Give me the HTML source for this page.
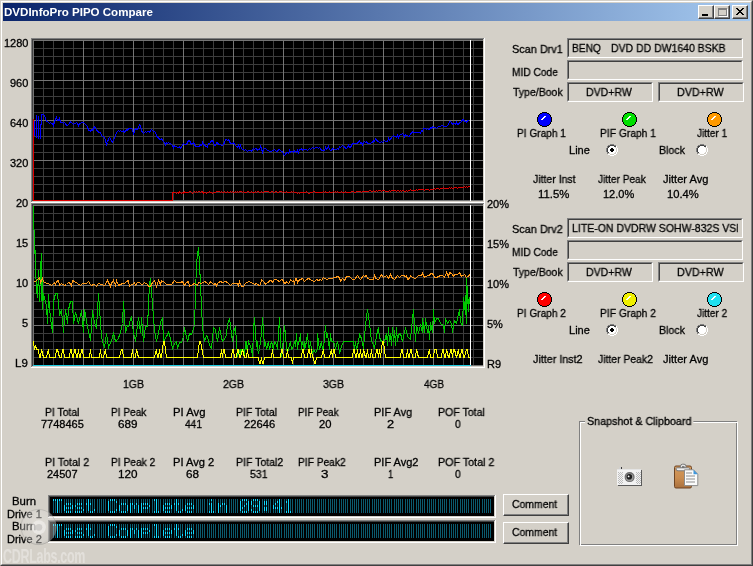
<!DOCTYPE html>
<html><head><meta charset="utf-8">
<style>
html,body{margin:0;padding:0;}
body{width:753px;height:566px;overflow:hidden;position:relative;background:#d4d0c8;font-family:"Liberation Sans",sans-serif;font-size:11px;color:#000;}
.abs{position:absolute;}
.t{position:absolute;white-space:nowrap;line-height:13px;font-size:11px;will-change:transform;-webkit-text-stroke:0.3px currentColor;}
.r{text-align:right;}
.c{text-align:center;}
.sunk{position:absolute;box-sizing:border-box;border-top:1px solid #808080;border-left:1px solid #808080;border-right:1px solid #fff;border-bottom:1px solid #fff;}
.sunk>i{position:absolute;left:0;top:0;right:0;bottom:0;border-top:1px solid #404040;border-left:1px solid #404040;border-right:1px solid #d4d0c8;border-bottom:1px solid #d4d0c8;}
.btn{position:absolute;box-sizing:border-box;border-top:1px solid #fff;border-left:1px solid #fff;border-right:1px solid #404040;border-bottom:1px solid #404040;background:#d4d0c8;}
.btn>i{position:absolute;left:0;top:0;right:0;bottom:0;border-right:1px solid #808080;border-bottom:1px solid #808080;}
.led{position:absolute;width:13px;height:13px;border:1px solid #000;border-radius:50%;}
.led::after{content:"";position:absolute;left:3px;top:3px;width:4px;height:1.5px;background:#fff;transform:rotate(-45deg);border-radius:1px;}
.radio{position:absolute;width:12px;height:12px;}
</style></head><body>
<!-- window frame -->
<div class="abs" style="left:0;top:0;width:753px;height:566px;box-sizing:border-box;border-top:1px solid #d4d0c8;border-left:1px solid #d4d0c8;border-right:1px solid #404040;border-bottom:1px solid #404040;"></div>
<div class="abs" style="left:1px;top:1px;width:751px;height:564px;box-sizing:border-box;border-top:1px solid #fff;border-left:1px solid #fff;border-right:1px solid #808080;border-bottom:1px solid #808080;"></div>
<!-- title bar -->
<div class="abs" style="left:3px;top:3px;width:747px;height:18px;background:linear-gradient(to right,#0a246a,#a6caf0);"></div>
<div class="btn" style="left:698px;top:5px;width:16px;height:14px;"><i></i></div>
<div class="abs" style="left:702px;top:14px;width:6px;height:2px;background:#000;"></div>
<div class="btn" style="left:714px;top:5px;width:16px;height:14px;"><i></i></div>
<div class="abs" style="left:718px;top:8px;width:9px;height:8px;box-sizing:border-box;border:1px solid #808080;border-top-width:2px;box-shadow:1px 1px 0 #fff;"></div>
<div class="btn" style="left:732px;top:5px;width:16px;height:14px;"><i></i></div>
<svg class="abs" style="left:732px;top:5px" width="16" height="14" shape-rendering="crispEdges"><path d="M4 3h2v1h-2zM10 3h2v1h-2zM5 4h2v1h-2zM9 4h2v1h-2zM6 5h4v1h-4zM7 6h2v1h-2zM6 7h4v1h-4zM5 8h2v1h-2zM9 8h2v1h-2zM4 9h2v1h-2zM10 9h2v1h-2z" fill="#000"/></svg>

<svg class="abs" style="left:0;top:0" width="500" height="380" shape-rendering="crispEdges">
<rect x="31" y="38" width="454" height="1" fill="#808080"/><rect x="31" y="38" width="1" height="164" fill="#808080"/>
<rect x="32" y="39" width="452" height="1" fill="#404040"/><rect x="32" y="39" width="1" height="162" fill="#404040"/>
<rect x="31" y="202" width="454" height="1" fill="#fff"/><rect x="484" y="38" width="1" height="165" fill="#fff"/>
<rect x="32" y="201" width="452" height="1" fill="#d4d0c8"/><rect x="483" y="39" width="1" height="163" fill="#d4d0c8"/>
<rect x="33" y="40" width="450" height="161" fill="#000"/>
<line x1="43.5" y1="40" x2="43.5" y2="201" stroke="#3c3c3c"/><line x1="53.5" y1="40" x2="53.5" y2="201" stroke="#3c3c3c"/><line x1="63.5" y1="40" x2="63.5" y2="201" stroke="#3c3c3c"/><line x1="73.5" y1="40" x2="73.5" y2="201" stroke="#3c3c3c"/><line x1="93.5" y1="40" x2="93.5" y2="201" stroke="#3c3c3c"/><line x1="103.5" y1="40" x2="103.5" y2="201" stroke="#3c3c3c"/><line x1="113.5" y1="40" x2="113.5" y2="201" stroke="#3c3c3c"/><line x1="123.5" y1="40" x2="123.5" y2="201" stroke="#3c3c3c"/><line x1="143.5" y1="40" x2="143.5" y2="201" stroke="#3c3c3c"/><line x1="153.5" y1="40" x2="153.5" y2="201" stroke="#3c3c3c"/><line x1="163.5" y1="40" x2="163.5" y2="201" stroke="#3c3c3c"/><line x1="173.5" y1="40" x2="173.5" y2="201" stroke="#3c3c3c"/><line x1="193.5" y1="40" x2="193.5" y2="201" stroke="#3c3c3c"/><line x1="203.5" y1="40" x2="203.5" y2="201" stroke="#3c3c3c"/><line x1="213.5" y1="40" x2="213.5" y2="201" stroke="#3c3c3c"/><line x1="223.5" y1="40" x2="223.5" y2="201" stroke="#3c3c3c"/><line x1="243.5" y1="40" x2="243.5" y2="201" stroke="#3c3c3c"/><line x1="253.5" y1="40" x2="253.5" y2="201" stroke="#3c3c3c"/><line x1="263.5" y1="40" x2="263.5" y2="201" stroke="#3c3c3c"/><line x1="273.5" y1="40" x2="273.5" y2="201" stroke="#3c3c3c"/><line x1="293.5" y1="40" x2="293.5" y2="201" stroke="#3c3c3c"/><line x1="303.5" y1="40" x2="303.5" y2="201" stroke="#3c3c3c"/><line x1="313.5" y1="40" x2="313.5" y2="201" stroke="#3c3c3c"/><line x1="323.5" y1="40" x2="323.5" y2="201" stroke="#3c3c3c"/><line x1="343.5" y1="40" x2="343.5" y2="201" stroke="#3c3c3c"/><line x1="353.5" y1="40" x2="353.5" y2="201" stroke="#3c3c3c"/><line x1="363.5" y1="40" x2="363.5" y2="201" stroke="#3c3c3c"/><line x1="373.5" y1="40" x2="373.5" y2="201" stroke="#3c3c3c"/><line x1="393.5" y1="40" x2="393.5" y2="201" stroke="#3c3c3c"/><line x1="403.5" y1="40" x2="403.5" y2="201" stroke="#3c3c3c"/><line x1="413.5" y1="40" x2="413.5" y2="201" stroke="#3c3c3c"/><line x1="423.5" y1="40" x2="423.5" y2="201" stroke="#3c3c3c"/><line x1="443.5" y1="40" x2="443.5" y2="201" stroke="#3c3c3c"/><line x1="453.5" y1="40" x2="453.5" y2="201" stroke="#3c3c3c"/><line x1="463.5" y1="40" x2="463.5" y2="201" stroke="#3c3c3c"/><line x1="473.5" y1="40" x2="473.5" y2="201" stroke="#3c3c3c"/><line x1="33" y1="48.5" x2="483" y2="48.5" stroke="#3c3c3c"/><line x1="33" y1="56.5" x2="483" y2="56.5" stroke="#3c3c3c"/><line x1="33" y1="64.5" x2="483" y2="64.5" stroke="#3c3c3c"/><line x1="33" y1="72.5" x2="483" y2="72.5" stroke="#3c3c3c"/><line x1="33" y1="88.5" x2="483" y2="88.5" stroke="#3c3c3c"/><line x1="33" y1="96.5" x2="483" y2="96.5" stroke="#3c3c3c"/><line x1="33" y1="104.5" x2="483" y2="104.5" stroke="#3c3c3c"/><line x1="33" y1="112.5" x2="483" y2="112.5" stroke="#3c3c3c"/><line x1="33" y1="128.5" x2="483" y2="128.5" stroke="#3c3c3c"/><line x1="33" y1="136.5" x2="483" y2="136.5" stroke="#3c3c3c"/><line x1="33" y1="144.5" x2="483" y2="144.5" stroke="#3c3c3c"/><line x1="33" y1="152.5" x2="483" y2="152.5" stroke="#3c3c3c"/><line x1="33" y1="168.5" x2="483" y2="168.5" stroke="#3c3c3c"/><line x1="33" y1="176.5" x2="483" y2="176.5" stroke="#3c3c3c"/><line x1="33" y1="184.5" x2="483" y2="184.5" stroke="#3c3c3c"/><line x1="33" y1="192.5" x2="483" y2="192.5" stroke="#3c3c3c"/><line x1="33.5" y1="40" x2="33.5" y2="201" stroke="#747474"/><line x1="83.5" y1="40" x2="83.5" y2="201" stroke="#747474"/><line x1="133.5" y1="40" x2="133.5" y2="201" stroke="#747474"/><line x1="183.5" y1="40" x2="183.5" y2="201" stroke="#747474"/><line x1="233.5" y1="40" x2="233.5" y2="201" stroke="#747474"/><line x1="283.5" y1="40" x2="283.5" y2="201" stroke="#747474"/><line x1="333.5" y1="40" x2="333.5" y2="201" stroke="#747474"/><line x1="383.5" y1="40" x2="383.5" y2="201" stroke="#747474"/><line x1="433.5" y1="40" x2="433.5" y2="201" stroke="#747474"/><line x1="33" y1="40.5" x2="483" y2="40.5" stroke="#747474"/><line x1="33" y1="80.5" x2="483" y2="80.5" stroke="#747474"/><line x1="33" y1="120.5" x2="483" y2="120.5" stroke="#747474"/><line x1="33" y1="160.5" x2="483" y2="160.5" stroke="#747474"/><line x1="33" y1="200.5" x2="483" y2="200.5" stroke="#747474"/>
<rect x="31" y="203" width="454" height="1" fill="#808080"/><rect x="31" y="203" width="1" height="165" fill="#808080"/>
<rect x="32" y="204" width="452" height="1" fill="#404040"/><rect x="32" y="204" width="1" height="163" fill="#404040"/>
<rect x="31" y="367" width="454" height="1" fill="#fff"/><rect x="484" y="203" width="1" height="165" fill="#fff"/>
<rect x="32" y="366" width="452" height="1" fill="#d4d0c8"/><rect x="483" y="204" width="1" height="163" fill="#d4d0c8"/>
<rect x="33" y="205" width="450" height="161" fill="#000"/>
<line x1="43.5" y1="205" x2="43.5" y2="366" stroke="#3c3c3c"/><line x1="53.5" y1="205" x2="53.5" y2="366" stroke="#3c3c3c"/><line x1="63.5" y1="205" x2="63.5" y2="366" stroke="#3c3c3c"/><line x1="73.5" y1="205" x2="73.5" y2="366" stroke="#3c3c3c"/><line x1="93.5" y1="205" x2="93.5" y2="366" stroke="#3c3c3c"/><line x1="103.5" y1="205" x2="103.5" y2="366" stroke="#3c3c3c"/><line x1="113.5" y1="205" x2="113.5" y2="366" stroke="#3c3c3c"/><line x1="123.5" y1="205" x2="123.5" y2="366" stroke="#3c3c3c"/><line x1="143.5" y1="205" x2="143.5" y2="366" stroke="#3c3c3c"/><line x1="153.5" y1="205" x2="153.5" y2="366" stroke="#3c3c3c"/><line x1="163.5" y1="205" x2="163.5" y2="366" stroke="#3c3c3c"/><line x1="173.5" y1="205" x2="173.5" y2="366" stroke="#3c3c3c"/><line x1="193.5" y1="205" x2="193.5" y2="366" stroke="#3c3c3c"/><line x1="203.5" y1="205" x2="203.5" y2="366" stroke="#3c3c3c"/><line x1="213.5" y1="205" x2="213.5" y2="366" stroke="#3c3c3c"/><line x1="223.5" y1="205" x2="223.5" y2="366" stroke="#3c3c3c"/><line x1="243.5" y1="205" x2="243.5" y2="366" stroke="#3c3c3c"/><line x1="253.5" y1="205" x2="253.5" y2="366" stroke="#3c3c3c"/><line x1="263.5" y1="205" x2="263.5" y2="366" stroke="#3c3c3c"/><line x1="273.5" y1="205" x2="273.5" y2="366" stroke="#3c3c3c"/><line x1="293.5" y1="205" x2="293.5" y2="366" stroke="#3c3c3c"/><line x1="303.5" y1="205" x2="303.5" y2="366" stroke="#3c3c3c"/><line x1="313.5" y1="205" x2="313.5" y2="366" stroke="#3c3c3c"/><line x1="323.5" y1="205" x2="323.5" y2="366" stroke="#3c3c3c"/><line x1="343.5" y1="205" x2="343.5" y2="366" stroke="#3c3c3c"/><line x1="353.5" y1="205" x2="353.5" y2="366" stroke="#3c3c3c"/><line x1="363.5" y1="205" x2="363.5" y2="366" stroke="#3c3c3c"/><line x1="373.5" y1="205" x2="373.5" y2="366" stroke="#3c3c3c"/><line x1="393.5" y1="205" x2="393.5" y2="366" stroke="#3c3c3c"/><line x1="403.5" y1="205" x2="403.5" y2="366" stroke="#3c3c3c"/><line x1="413.5" y1="205" x2="413.5" y2="366" stroke="#3c3c3c"/><line x1="423.5" y1="205" x2="423.5" y2="366" stroke="#3c3c3c"/><line x1="443.5" y1="205" x2="443.5" y2="366" stroke="#3c3c3c"/><line x1="453.5" y1="205" x2="453.5" y2="366" stroke="#3c3c3c"/><line x1="463.5" y1="205" x2="463.5" y2="366" stroke="#3c3c3c"/><line x1="473.5" y1="205" x2="473.5" y2="366" stroke="#3c3c3c"/><line x1="33" y1="213.5" x2="483" y2="213.5" stroke="#3c3c3c"/><line x1="33" y1="221.5" x2="483" y2="221.5" stroke="#3c3c3c"/><line x1="33" y1="229.5" x2="483" y2="229.5" stroke="#3c3c3c"/><line x1="33" y1="237.5" x2="483" y2="237.5" stroke="#3c3c3c"/><line x1="33" y1="253.5" x2="483" y2="253.5" stroke="#3c3c3c"/><line x1="33" y1="261.5" x2="483" y2="261.5" stroke="#3c3c3c"/><line x1="33" y1="269.5" x2="483" y2="269.5" stroke="#3c3c3c"/><line x1="33" y1="277.5" x2="483" y2="277.5" stroke="#3c3c3c"/><line x1="33" y1="293.5" x2="483" y2="293.5" stroke="#3c3c3c"/><line x1="33" y1="301.5" x2="483" y2="301.5" stroke="#3c3c3c"/><line x1="33" y1="309.5" x2="483" y2="309.5" stroke="#3c3c3c"/><line x1="33" y1="317.5" x2="483" y2="317.5" stroke="#3c3c3c"/><line x1="33" y1="333.5" x2="483" y2="333.5" stroke="#3c3c3c"/><line x1="33" y1="341.5" x2="483" y2="341.5" stroke="#3c3c3c"/><line x1="33" y1="349.5" x2="483" y2="349.5" stroke="#3c3c3c"/><line x1="33" y1="357.5" x2="483" y2="357.5" stroke="#3c3c3c"/><line x1="33.5" y1="205" x2="33.5" y2="366" stroke="#747474"/><line x1="83.5" y1="205" x2="83.5" y2="366" stroke="#747474"/><line x1="133.5" y1="205" x2="133.5" y2="366" stroke="#747474"/><line x1="183.5" y1="205" x2="183.5" y2="366" stroke="#747474"/><line x1="233.5" y1="205" x2="233.5" y2="366" stroke="#747474"/><line x1="283.5" y1="205" x2="283.5" y2="366" stroke="#747474"/><line x1="333.5" y1="205" x2="333.5" y2="366" stroke="#747474"/><line x1="383.5" y1="205" x2="383.5" y2="366" stroke="#747474"/><line x1="433.5" y1="205" x2="433.5" y2="366" stroke="#747474"/><line x1="33" y1="205.5" x2="483" y2="205.5" stroke="#747474"/><line x1="33" y1="245.5" x2="483" y2="245.5" stroke="#747474"/><line x1="33" y1="285.5" x2="483" y2="285.5" stroke="#747474"/><line x1="33" y1="325.5" x2="483" y2="325.5" stroke="#747474"/><line x1="33" y1="365.5" x2="483" y2="365.5" stroke="#747474"/>
<g shape-rendering="crispEdges">
<polyline fill="none" stroke="#e00000" stroke-width="1" points="33.5,118.5 33.5,200.5 172.5,200.5 172.5,192.5 173.5,192.5 174.5,192.5 175.5,192.5 176.5,193.5 177.5,192.5 178.5,193.5 179.5,191.5 180.5,192.5 181.5,193.5 182.5,192.5 183.5,193.5 184.5,191.5 185.5,192.5 186.5,192.5 187.5,192.5 188.5,192.5 189.5,191.5 190.5,191.5 191.5,192.5 192.5,193.5 193.5,192.5 194.5,191.5 195.5,192.5 196.5,191.5 197.5,192.5 198.5,191.5 199.5,191.5 200.5,192.5 201.5,191.5 202.5,191.5 203.5,193.5 204.5,192.5 205.5,192.5 206.5,193.5 207.5,192.5 208.5,192.5 209.5,191.5 210.5,192.5 211.5,192.5 212.5,193.5 213.5,192.5 214.5,192.5 215.5,192.5 216.5,191.5 217.5,191.5 218.5,191.5 219.5,191.5 220.5,192.5 221.5,191.5 222.5,192.5 223.5,192.5 224.5,191.5 225.5,192.5 226.5,192.5 227.5,191.5 228.5,192.5 229.5,192.5 230.5,191.5 231.5,192.5 232.5,191.5 233.5,192.5 234.5,192.5 235.5,191.5 236.5,192.5 237.5,191.5 238.5,192.5 239.5,191.5 240.5,191.5 241.5,191.5 242.5,192.5 243.5,191.5 244.5,192.5 245.5,192.5 246.5,192.5 247.5,191.5 248.5,191.5 249.5,192.5 250.5,192.5 251.5,191.5 252.5,192.5 253.5,192.5 254.5,192.5 255.5,191.5 256.5,192.5 257.5,191.5 258.5,191.5 259.5,192.5 260.5,192.5 261.5,191.5 262.5,192.5 263.5,192.5 264.5,191.5 265.5,191.5 266.5,191.5 267.5,191.5 268.5,191.5 269.5,192.5 270.5,192.5 271.5,191.5 272.5,191.5 273.5,192.5 274.5,192.5 275.5,191.5 276.5,191.5 277.5,192.5 278.5,192.5 279.5,191.5 280.5,191.5 281.5,191.5 282.5,192.5 283.5,191.5 284.5,192.5 285.5,192.5 286.5,191.5 287.5,192.5 288.5,192.5 289.5,192.5 290.5,192.5 291.5,191.5 292.5,192.5 293.5,191.5 294.5,192.5 295.5,192.5 296.5,192.5 297.5,193.5 298.5,192.5 299.5,193.5 300.5,192.5 301.5,192.5 302.5,192.5 303.5,192.5 304.5,192.5 305.5,192.5 306.5,191.5 307.5,192.5 308.5,193.5 309.5,193.5 310.5,192.5 311.5,192.5 312.5,192.5 313.5,191.5 314.5,191.5 315.5,192.5 316.5,192.5 317.5,192.5 318.5,192.5 319.5,192.5 320.5,192.5 321.5,192.5 322.5,192.5 323.5,191.5 324.5,192.5 325.5,191.5 326.5,192.5 327.5,192.5 328.5,192.5 329.5,191.5 330.5,192.5 331.5,192.5 332.5,192.5 333.5,191.5 334.5,192.5 335.5,191.5 336.5,192.5 337.5,191.5 338.5,192.5 339.5,192.5 340.5,192.5 341.5,191.5 342.5,192.5 343.5,192.5 344.5,192.5 345.5,191.5 346.5,192.5 347.5,192.5 348.5,192.5 349.5,192.5 350.5,192.5 351.5,191.5 352.5,191.5 353.5,191.5 354.5,192.5 355.5,192.5 356.5,191.5 357.5,191.5 358.5,191.5 359.5,191.5 360.5,191.5 361.5,192.5 362.5,191.5 363.5,191.5 364.5,191.5 365.5,191.5 366.5,191.5 367.5,191.5 368.5,191.5 369.5,190.5 370.5,190.5 371.5,191.5 372.5,191.5 373.5,190.5 374.5,191.5 375.5,191.5 376.5,190.5 377.5,191.5 378.5,190.5 379.5,190.5 380.5,190.5 381.5,191.5 382.5,190.5 383.5,190.5 384.5,190.5 385.5,191.5 386.5,191.5 387.5,191.5 388.5,191.5 389.5,190.5 390.5,191.5 391.5,190.5 392.5,190.5 393.5,190.5 394.5,190.5 395.5,190.5 396.5,191.5 397.5,190.5 398.5,190.5 399.5,191.5 400.5,190.5 401.5,191.5 402.5,190.5 403.5,190.5 404.5,191.5 405.5,191.5 406.5,190.5 407.5,191.5 408.5,190.5 409.5,190.5 410.5,189.5 411.5,190.5 412.5,190.5 413.5,190.5 414.5,190.5 415.5,190.5 416.5,189.5 417.5,190.5 418.5,189.5 419.5,189.5 420.5,189.5 421.5,189.5 422.5,189.5 423.5,189.5 424.5,190.5 425.5,189.5 426.5,189.5 427.5,189.5 428.5,189.5 429.5,190.5 430.5,189.5 431.5,189.5 432.5,189.5 433.5,189.5 434.5,188.5 435.5,189.5 436.5,188.5 437.5,188.5 438.5,188.5 439.5,189.5 440.5,188.5 441.5,188.5 442.5,188.5 443.5,187.5 444.5,188.5 445.5,188.5 446.5,188.5 447.5,188.5 448.5,188.5 449.5,187.5 450.5,188.5 451.5,187.5 452.5,188.5 453.5,188.5 454.5,187.5 455.5,187.5 456.5,187.5 457.5,188.5 458.5,187.5 459.5,187.5 460.5,187.5 461.5,187.5 462.5,187.5 463.5,187.5 464.5,186.5 465.5,187.5 466.5,186.5 467.5,187.5 468.5,186.5 469.5,186.5"/>
<polyline fill="none" stroke="#0000ff" stroke-width="1" points="41.5,114.5 43.5,114.5 44.5,115.5 45.5,118.5 46.5,121.5 47.5,121.5 48.5,122.5 49.5,123.5 50.5,122.5 51.5,123.5 52.5,123.5 53.5,125.5 54.5,121.5 55.5,119.5 56.5,117.5 57.5,120.5 58.5,120.5 59.5,118.5 60.5,122.5 61.5,122.5 62.5,122.5 63.5,123.5 64.5,122.5 65.5,123.5 66.5,125.5 67.5,125.5 68.5,124.5 69.5,123.5 70.5,121.5 71.5,122.5 72.5,123.5 73.5,124.5 74.5,123.5 75.5,123.5 76.5,122.5 77.5,123.5 78.5,125.5 79.5,123.5 80.5,123.5 81.5,122.5 82.5,122.5 83.5,122.5 84.5,123.5 85.5,124.5 86.5,125.5 87.5,126.5 88.5,130.5 89.5,130.5 90.5,131.5 91.5,129.5 92.5,130.5 93.5,128.5 94.5,126.5 95.5,127.5 96.5,130.5 97.5,130.5 98.5,132.5 99.5,132.5 100.5,132.5 101.5,135.5 102.5,136.5 103.5,136.5 104.5,137.5 105.5,140.5 106.5,144.5 107.5,142.5 108.5,138.5 109.5,137.5 110.5,138.5 111.5,141.5 112.5,142.5 113.5,139.5 114.5,138.5 115.5,135.5 116.5,132.5 117.5,131.5 118.5,130.5 119.5,131.5 120.5,130.5 121.5,131.5 122.5,131.5 123.5,130.5 124.5,132.5 125.5,131.5 126.5,129.5 127.5,130.5 128.5,128.5 129.5,128.5 130.5,128.5 131.5,128.5 132.5,129.5 133.5,134.5 134.5,130.5 135.5,128.5 136.5,129.5 137.5,129.5 138.5,127.5 139.5,124.5 140.5,125.5 141.5,130.5 142.5,132.5 143.5,133.5 144.5,132.5 145.5,131.5 146.5,132.5 147.5,131.5 148.5,131.5 149.5,132.5 150.5,130.5 151.5,129.5 152.5,130.5 153.5,131.5 154.5,131.5 155.5,132.5 156.5,135.5 157.5,137.5 158.5,137.5 159.5,139.5 160.5,139.5 161.5,138.5 162.5,140.5 163.5,141.5 164.5,142.5 165.5,144.5 166.5,142.5 167.5,143.5 168.5,142.5 169.5,143.5 170.5,143.5 171.5,144.5 172.5,145.5 173.5,147.5 174.5,145.5 175.5,146.5 176.5,146.5 177.5,147.5 178.5,147.5 179.5,146.5 180.5,148.5 181.5,147.5 182.5,144.5 183.5,143.5 184.5,144.5 185.5,144.5 186.5,144.5 187.5,142.5 188.5,140.5 189.5,140.5 190.5,142.5 191.5,144.5 192.5,143.5 193.5,142.5 194.5,144.5 195.5,146.5 196.5,146.5 197.5,146.5 198.5,146.5 199.5,146.5 200.5,144.5 201.5,145.5 202.5,142.5 203.5,144.5 204.5,144.5 205.5,146.5 206.5,146.5 207.5,147.5 208.5,143.5 209.5,143.5 210.5,142.5 211.5,140.5 212.5,140.5 213.5,142.5 214.5,145.5 215.5,145.5 216.5,142.5 217.5,142.5 218.5,144.5 219.5,144.5 220.5,144.5 221.5,145.5 222.5,145.5 223.5,144.5 224.5,142.5 225.5,139.5 226.5,139.5 227.5,140.5 228.5,139.5 229.5,141.5 230.5,143.5 231.5,143.5 232.5,143.5 233.5,142.5 234.5,144.5 235.5,145.5 236.5,146.5 237.5,147.5 238.5,145.5 239.5,147.5 240.5,145.5 241.5,148.5 242.5,149.5 243.5,149.5 244.5,150.5 245.5,149.5 246.5,150.5 247.5,151.5 248.5,150.5 249.5,150.5 250.5,150.5 251.5,151.5 252.5,149.5 253.5,148.5 254.5,149.5 255.5,148.5 256.5,148.5 257.5,150.5 258.5,149.5 259.5,149.5 260.5,146.5 261.5,148.5 262.5,152.5 263.5,149.5 264.5,148.5 265.5,148.5 266.5,149.5 267.5,150.5 268.5,150.5 269.5,151.5 270.5,151.5 271.5,151.5 272.5,150.5 273.5,150.5 274.5,149.5 275.5,150.5 276.5,151.5 277.5,151.5 278.5,149.5 279.5,149.5 280.5,150.5 281.5,151.5 282.5,151.5 283.5,154.5 284.5,155.5 285.5,154.5 286.5,152.5 287.5,152.5 288.5,153.5 289.5,150.5 290.5,152.5 291.5,151.5 292.5,151.5 293.5,152.5 294.5,150.5 295.5,151.5 296.5,152.5 297.5,150.5 298.5,152.5 299.5,149.5 300.5,149.5 301.5,148.5 302.5,150.5 303.5,149.5 304.5,149.5 305.5,149.5 306.5,149.5 307.5,150.5 308.5,149.5 309.5,148.5 310.5,149.5 311.5,148.5 312.5,147.5 313.5,148.5 314.5,148.5 315.5,147.5 316.5,147.5 317.5,147.5 318.5,148.5 319.5,147.5 320.5,148.5 321.5,150.5 322.5,150.5 323.5,150.5 324.5,150.5 325.5,147.5 326.5,149.5 327.5,148.5 328.5,146.5 329.5,149.5 330.5,150.5 331.5,150.5 332.5,148.5 333.5,148.5 334.5,149.5 335.5,149.5 336.5,149.5 337.5,148.5 338.5,149.5 339.5,146.5 340.5,147.5 341.5,146.5 342.5,145.5 343.5,146.5 344.5,146.5 345.5,148.5 346.5,148.5 347.5,147.5 348.5,145.5 349.5,147.5 350.5,147.5 351.5,145.5 352.5,143.5 353.5,143.5 354.5,143.5 355.5,143.5 356.5,143.5 357.5,143.5 358.5,141.5 359.5,140.5 360.5,143.5 361.5,142.5 362.5,144.5 363.5,142.5 364.5,141.5 365.5,142.5 366.5,141.5 367.5,143.5 368.5,143.5 369.5,143.5 370.5,143.5 371.5,142.5 372.5,142.5 373.5,140.5 374.5,141.5 375.5,138.5 376.5,139.5 377.5,141.5 378.5,141.5 379.5,142.5 380.5,142.5 381.5,141.5 382.5,142.5 383.5,141.5 384.5,140.5 385.5,141.5 386.5,141.5 387.5,141.5 388.5,138.5 389.5,140.5 390.5,139.5 391.5,137.5 392.5,136.5 393.5,135.5 394.5,136.5 395.5,136.5 396.5,137.5 397.5,135.5 398.5,137.5 399.5,135.5 400.5,134.5 401.5,134.5 402.5,133.5 403.5,134.5 404.5,136.5 405.5,134.5 406.5,135.5 407.5,135.5 408.5,136.5 409.5,136.5 410.5,133.5 411.5,133.5 412.5,131.5 413.5,132.5 414.5,132.5 415.5,132.5 416.5,132.5 417.5,132.5 418.5,132.5 419.5,132.5 420.5,133.5 421.5,130.5 422.5,131.5 423.5,128.5 424.5,128.5 425.5,128.5 426.5,129.5 427.5,128.5 428.5,129.5 429.5,129.5 430.5,127.5 431.5,128.5 432.5,126.5 433.5,127.5 434.5,127.5 435.5,127.5 436.5,128.5 437.5,127.5 438.5,126.5 439.5,126.5 440.5,126.5 441.5,125.5 442.5,125.5 443.5,126.5 444.5,126.5 445.5,126.5 446.5,126.5 447.5,125.5 448.5,124.5 449.5,121.5 450.5,121.5 451.5,122.5 452.5,124.5 453.5,123.5 454.5,123.5 455.5,124.5 456.5,122.5 457.5,124.5 458.5,124.5 459.5,122.5 460.5,122.5 461.5,121.5 462.5,119.5 463.5,119.5 464.5,121.5 465.5,121.5 466.5,122.5 467.5,120.5 468.5,120.5 469.5,121.5"/>
<path d="M34.5 121v15M36.5 115v23M38.5 116v23M40.5 124v15M41.5 114v11" stroke="#0000ff" fill="none"/>
<line x1="470.5" y1="40" x2="470.5" y2="201" stroke="#fff"/>
<polyline fill="none" stroke="#00c800" stroke-width="1" points="33.5,205.5 33.5,229.5 34.5,230.5 34.5,253.5 35.5,250.5 35.5,266.5 36.5,290.5 37.5,297.5 38.5,270.5 39.5,301.5 40.5,269.5 41.5,253.5 41.5,300.5 42.5,280.5 42.5,309.5 43.5,293.5 46.5,305.5 47.5,323.5 48.5,294.5 50.5,318.5 52.5,332.5 53.5,301.5 55.5,293.5 57.5,293.5 59.5,314.5 61.5,310.5 63.5,332.5 65.5,309.5 67.5,323.5 68.5,309.5 70.5,301.5 72.5,301.5 73.5,323.5 75.5,312.5 78.5,323.5 81.5,310.5 83.5,332.5 84.5,309.5 87.5,326.5 90.5,340.5 92.5,310.5 94.5,322.5 96.5,328.5 98.5,293.5 101.5,337.5 104.5,347.5 106.5,333.5 108.5,347.5 111.5,340.5 113.5,333.5 115.5,341.5 117.5,340.5 120.5,332.5 122.5,323.5 123.5,301.5 125.5,332.5 127.5,325.5 128.5,326.5 130.5,319.5 131.5,317.5 133.5,332.5 135.5,341.5 138.5,317.5 140.5,332.5 141.5,317.5 143.5,341.5 145.5,326.5 147.5,326.5 149.5,283.5 150.5,278.5 152.5,304.5 154.5,330.5 156.5,341.5 158.5,332.5 160.5,322.5 162.5,317.5 163.5,341.5 166.5,336.5 168.5,332.5 169.5,334.5 172.5,348.5 174.5,343.5 176.5,341.5 177.5,348.5 179.5,342.5 181.5,342.5 183.5,336.5 184.5,327.5 187.5,341.5 189.5,333.5 191.5,334.5 194.5,325.5 196.5,263.5 198.5,247.5 199.5,263.5 202.5,327.5 204.5,341.5 206.5,335.5 207.5,336.5 209.5,345.5 211.5,348.5 213.5,327.5 215.5,329.5 217.5,341.5 219.5,327.5 221.5,337.5 222.5,341.5 224.5,339.5 226.5,334.5 227.5,324.5 229.5,318.5 232.5,341.5 233.5,331.5 235.5,327.5 237.5,355.5 240.5,349.5 240.5,356.5 241.5,349.5 243.5,349.5 244.5,356.5 245.5,341.5 246.5,349.5 246.5,341.5 247.5,348.5 248.5,341.5 250.5,346.5 251.5,349.5 252.5,356.5 253.5,329.5 254.5,317.5 255.5,333.5 256.5,346.5 257.5,341.5 257.5,349.5 258.5,352.5 259.5,349.5 261.5,333.5 262.5,317.5 263.5,330.5 264.5,346.5 265.5,342.5 266.5,349.5 268.5,341.5 269.5,349.5 271.5,341.5 273.5,349.5 274.5,341.5 276.5,344.5 277.5,349.5 278.5,333.5 279.5,317.5 280.5,338.5 281.5,356.5 283.5,338.5 284.5,325.5 285.5,334.5 286.5,348.5 287.5,353.5 289.5,344.5 290.5,341.5 291.5,349.5 293.5,346.5 294.5,341.5 295.5,346.5 296.5,333.5 297.5,349.5 298.5,341.5 299.5,341.5 300.5,333.5 301.5,349.5 302.5,341.5 303.5,346.5 304.5,341.5 304.5,349.5 306.5,341.5 307.5,333.5 308.5,346.5 309.5,349.5 310.5,341.5 311.5,349.5 312.5,353.5 313.5,349.5 315.5,352.5 317.5,349.5 317.5,333.5 318.5,341.5 319.5,349.5 321.5,341.5 322.5,349.5 323.5,349.5 324.5,337.5 325.5,325.5 326.5,337.5 327.5,333.5 328.5,341.5 329.5,349.5 330.5,333.5 331.5,341.5 333.5,341.5 335.5,348.5 337.5,341.5 338.5,346.5 339.5,353.5 341.5,346.5 343.5,341.5 353.5,341.5 354.5,349.5 355.5,341.5 356.5,349.5 358.5,341.5 359.5,334.5 361.5,338.5 363.5,348.5 365.5,325.5 367.5,309.5 369.5,323.5 371.5,341.5 372.5,342.5 374.5,348.5 376.5,335.5 378.5,327.5 379.5,337.5 381.5,341.5 383.5,343.5 384.5,341.5 386.5,333.5 387.5,345.5 388.5,327.5 389.5,341.5 390.5,333.5 391.5,345.5 392.5,327.5 393.5,341.5 394.5,330.5 395.5,345.5 396.5,327.5 397.5,341.5 398.5,334.5 400.5,333.5 402.5,341.5 403.5,336.5 405.5,327.5 407.5,336.5 410.5,339.5 411.5,328.5 413.5,309.5 415.5,341.5 416.5,325.5 418.5,332.5 420.5,325.5 422.5,332.5 422.5,318.5 424.5,332.5 425.5,318.5 427.5,332.5 428.5,325.5 429.5,339.5 430.5,322.5 432.5,332.5 433.5,309.5 434.5,323.5 436.5,318.5 438.5,318.5 440.5,323.5 443.5,325.5 444.5,332.5 445.5,318.5 447.5,323.5 449.5,320.5 451.5,323.5 452.5,332.5 454.5,320.5 456.5,323.5 459.5,309.5 460.5,322.5 462.5,325.5 463.5,297.5 465.5,314.5 466.5,277.5 466.5,323.5 467.5,286.5 468.5,311.5 469.5,297.5"/>
<polyline fill="none" stroke="#ff9a1a" stroke-width="1" points="33.5,281.5 35.5,281.5 37.5,279.5 39.5,277.5 40.5,282.5 42.5,278.5 43.5,281.5 46.5,283.5 48.5,283.5 51.5,285.5 52.5,284.5 54.5,282.5 55.5,284.5 56.5,281.5 58.5,280.5 59.5,285.5 61.5,283.5 64.5,285.5 66.5,284.5 68.5,282.5 70.5,283.5 71.5,285.5 72.5,280.5 74.5,281.5 77.5,283.5 80.5,285.5 82.5,283.5 84.5,283.5 86.5,283.5 88.5,281.5 90.5,284.5 91.5,285.5 93.5,284.5 94.5,284.5 96.5,286.5 98.5,283.5 101.5,284.5 104.5,285.5 106.5,282.5 107.5,280.5 110.5,286.5 111.5,282.5 112.5,282.5 113.5,280.5 115.5,285.5 116.5,280.5 118.5,285.5 120.5,284.5 122.5,283.5 124.5,283.5 125.5,282.5 126.5,281.5 128.5,280.5 129.5,286.5 131.5,284.5 132.5,284.5 134.5,282.5 135.5,285.5 137.5,282.5 139.5,282.5 141.5,284.5 142.5,284.5 144.5,282.5 147.5,284.5 148.5,286.5 150.5,286.5 152.5,282.5 154.5,280.5 156.5,286.5 158.5,280.5 160.5,284.5 161.5,280.5 164.5,282.5 166.5,284.5 168.5,284.5 170.5,284.5 171.5,284.5 174.5,280.5 176.5,282.5 178.5,282.5 180.5,282.5 182.5,281.5 184.5,285.5 186.5,282.5 188.5,281.5 189.5,286.5 192.5,284.5 194.5,283.5 197.5,285.5 198.5,282.5 201.5,283.5 204.5,281.5 206.5,282.5 208.5,284.5 209.5,283.5 210.5,281.5 213.5,284.5 215.5,283.5 216.5,285.5 217.5,283.5 218.5,282.5 220.5,281.5 222.5,282.5 225.5,281.5 227.5,282.5 228.5,283.5 230.5,285.5 232.5,283.5 235.5,283.5 237.5,283.5 238.5,285.5 239.5,281.5 241.5,286.5 243.5,286.5 245.5,283.5 248.5,281.5 251.5,282.5 254.5,284.5 256.5,283.5 257.5,284.5 259.5,285.5 260.5,284.5 261.5,279.5 264.5,282.5 265.5,284.5 267.5,282.5 268.5,282.5 269.5,280.5 271.5,280.5 272.5,282.5 274.5,279.5 276.5,279.5 277.5,280.5 279.5,281.5 280.5,280.5 281.5,279.5 282.5,279.5 284.5,283.5 285.5,283.5 286.5,281.5 288.5,283.5 289.5,282.5 290.5,279.5 292.5,281.5 293.5,280.5 294.5,283.5 295.5,278.5 296.5,278.5 297.5,282.5 298.5,280.5 300.5,279.5 302.5,278.5 304.5,281.5 306.5,279.5 308.5,278.5 310.5,279.5 311.5,280.5 314.5,281.5 315.5,280.5 316.5,279.5 318.5,280.5 320.5,279.5 321.5,280.5 323.5,277.5 326.5,279.5 329.5,278.5 332.5,278.5 333.5,277.5 335.5,277.5 337.5,276.5 339.5,277.5 340.5,281.5 342.5,278.5 344.5,280.5 346.5,276.5 349.5,276.5 352.5,279.5 354.5,279.5 357.5,275.5 359.5,278.5 360.5,279.5 363.5,275.5 364.5,276.5 366.5,275.5 367.5,278.5 370.5,279.5 371.5,279.5 373.5,279.5 374.5,274.5 375.5,278.5 378.5,279.5 380.5,276.5 381.5,274.5 383.5,277.5 386.5,275.5 388.5,278.5 390.5,274.5 392.5,278.5 393.5,278.5 394.5,279.5 397.5,275.5 399.5,277.5 401.5,275.5 403.5,275.5 405.5,276.5 406.5,275.5 407.5,279.5 409.5,278.5 410.5,275.5 412.5,277.5 415.5,278.5 418.5,275.5 421.5,275.5 422.5,273.5 424.5,277.5 427.5,275.5 429.5,275.5 430.5,273.5 431.5,273.5 433.5,274.5 434.5,277.5 436.5,277.5 438.5,276.5 440.5,275.5 442.5,275.5 444.5,277.5 446.5,272.5 448.5,276.5 449.5,272.5 451.5,273.5 453.5,276.5 454.5,274.5 457.5,274.5 459.5,272.5 461.5,276.5 464.5,274.5 466.5,277.5 467.5,276.5 469.5,275.5 470.5,273.5"/>
<polyline fill="none" stroke="#ffff00" stroke-width="1" points="33.5,341.5 34.5,349.5 35.5,345.5 36.5,349.5 38.5,349.5 39.5,357.5 40.5,357.5 41.5,349.5 41.5,349.5 43.5,357.5 46.5,357.5 48.5,349.5 48.5,349.5 49.5,357.5 55.5,357.5 56.5,349.5 57.5,349.5 59.5,357.5 61.5,357.5 62.5,349.5 63.5,349.5 64.5,357.5 69.5,357.5 70.5,349.5 71.5,349.5 72.5,357.5 73.5,357.5 74.5,349.5 75.5,349.5 76.5,357.5 77.5,357.5 78.5,349.5 78.5,349.5 79.5,357.5 80.5,357.5 81.5,349.5 82.5,349.5 83.5,357.5 89.5,357.5 90.5,349.5 90.5,349.5 91.5,357.5 99.5,357.5 100.5,349.5 100.5,349.5 101.5,357.5 103.5,357.5 105.5,349.5 105.5,349.5 106.5,357.5 119.5,357.5 121.5,349.5 122.5,349.5 123.5,357.5 131.5,357.5 132.5,349.5 132.5,349.5 133.5,357.5 135.5,357.5 136.5,349.5 136.5,349.5 138.5,357.5 154.5,357.5 156.5,349.5 156.5,349.5 157.5,357.5 158.5,357.5 159.5,349.5 159.5,349.5 160.5,357.5 161.5,357.5 163.5,341.5 164.5,341.5 166.5,357.5 197.5,357.5 199.5,341.5 200.5,341.5 203.5,357.5 220.5,357.5 221.5,349.5 221.5,349.5 222.5,357.5 222.5,357.5 223.5,349.5 224.5,349.5 225.5,357.5 231.5,357.5 232.5,349.5 233.5,349.5 234.5,357.5 236.5,357.5 237.5,349.5 238.5,349.5 239.5,357.5 240.5,357.5 242.5,349.5 242.5,349.5 244.5,357.5 246.5,357.5 247.5,349.5 247.5,349.5 248.5,357.5 258.5,357.5 259.5,363.5 260.5,363.5 261.5,357.5 261.5,357.5 262.5,363.5 263.5,363.5 264.5,357.5 271.5,357.5 272.5,349.5 272.5,349.5 273.5,357.5 280.5,357.5 281.5,349.5 282.5,349.5 283.5,357.5 286.5,357.5 287.5,349.5 287.5,349.5 288.5,357.5 291.5,357.5 292.5,363.5 292.5,363.5 293.5,357.5 301.5,357.5 302.5,349.5 303.5,349.5 304.5,357.5 307.5,357.5 308.5,349.5 309.5,349.5 310.5,357.5 310.5,357.5 311.5,349.5 311.5,349.5 312.5,357.5 313.5,357.5 314.5,363.5 315.5,363.5 316.5,357.5 321.5,357.5 323.5,349.5 323.5,349.5 324.5,357.5 329.5,357.5 331.5,349.5 331.5,349.5 332.5,357.5 332.5,357.5 333.5,349.5 334.5,349.5 335.5,357.5 352.5,357.5 353.5,349.5 354.5,349.5 355.5,357.5 356.5,357.5 357.5,349.5 357.5,349.5 358.5,357.5 359.5,357.5 360.5,349.5 360.5,349.5 361.5,357.5 362.5,357.5 363.5,349.5 363.5,349.5 365.5,357.5 366.5,357.5 367.5,349.5 367.5,349.5 368.5,357.5 370.5,357.5 371.5,349.5 371.5,349.5 372.5,357.5 375.5,357.5 376.5,349.5 377.5,349.5 378.5,357.5 378.5,357.5 379.5,349.5 379.5,349.5 380.5,357.5 380.5,357.5 382.5,341.5 383.5,341.5 385.5,357.5 400.5,357.5 401.5,349.5 402.5,349.5 403.5,357.5 406.5,357.5 407.5,349.5 407.5,349.5 408.5,357.5 409.5,357.5 410.5,349.5 411.5,349.5 412.5,357.5 415.5,357.5 416.5,349.5 416.5,349.5 418.5,357.5 427.5,357.5 429.5,349.5 429.5,349.5 430.5,357.5 433.5,357.5 434.5,349.5 436.5,349.5 437.5,357.5 441.5,357.5 442.5,349.5 443.5,349.5 444.5,357.5 445.5,357.5 446.5,349.5 446.5,349.5 448.5,357.5 449.5,357.5 450.5,349.5 451.5,349.5 452.5,357.5 452.5,357.5 453.5,349.5 454.5,349.5 456.5,357.5 456.5,357.5 458.5,349.5 458.5,349.5 459.5,357.5 460.5,357.5 461.5,349.5 462.5,349.5 463.5,357.5 464.5,357.5 466.5,349.5 467.5,349.5 468.5,357.5 470.5,357.5"/>
<line x1="33" y1="365.5" x2="471" y2="365.5" stroke="#1ecbe1"/>
<line x1="470.5" y1="205" x2="470.5" y2="365" stroke="#fff"/>
</g>
</svg>

<!-- axis labels -->

<!-- stats -->

<div class="sunk" style="left:567px;top:38px;width:176px;height:20px;overflow:hidden;"><i></i></div>
<div class="sunk" style="left:567px;top:60px;width:176px;height:20px;"><i></i></div>
<div class="sunk" style="left:567px;top:82px;width:86px;height:20px;"><i></i></div>
<div class="sunk" style="left:658px;top:82px;width:86px;height:20px;"><i></i></div>
<svg class="abs" style="left:537px;top:112px" width="15" height="15" shape-rendering="crispEdges"><path d="M5 0h5v1h-5zM3 1h9v1h-9zM2 2h11v1h-11zM1 3h13v1h-13zM1 4h13v1h-13zM0 5h15v1h-15zM0 6h15v1h-15zM0 7h15v1h-15zM0 8h15v1h-15zM0 9h15v1h-15zM1 10h13v1h-13zM1 11h13v1h-13zM2 12h11v1h-11zM3 13h9v1h-9zM5 14h5v1h-5z" fill="#0000ff"/><path d="M5 0h5v1h-5zM3 1h2v1h-2zM10 1h2v1h-2zM2 2h1v1h-1zM12 2h1v1h-1zM1 3h1v1h-1zM13 3h1v1h-1zM1 4h1v1h-1zM13 4h1v1h-1zM0 5h1v1h-1zM14 5h1v1h-1zM0 6h1v1h-1zM14 6h1v1h-1zM0 7h1v1h-1zM14 7h1v1h-1zM0 8h1v1h-1zM14 8h1v1h-1zM0 9h1v1h-1zM14 9h1v1h-1zM1 10h1v1h-1zM13 10h1v1h-1zM1 11h1v1h-1zM13 11h1v1h-1zM2 12h1v1h-1zM12 12h1v1h-1zM3 13h2v1h-2zM10 13h2v1h-2zM5 14h5v1h-5z" fill="#000"/><path d="M7 4h2v1h-2zM6 5h2v1h-2zM5 6h2v1h-2zM4 7h2v1h-2z" fill="#fff"/></svg>
<svg class="abs" style="left:622px;top:112px" width="15" height="15" shape-rendering="crispEdges"><path d="M5 0h5v1h-5zM3 1h9v1h-9zM2 2h11v1h-11zM1 3h13v1h-13zM1 4h13v1h-13zM0 5h15v1h-15zM0 6h15v1h-15zM0 7h15v1h-15zM0 8h15v1h-15zM0 9h15v1h-15zM1 10h13v1h-13zM1 11h13v1h-13zM2 12h11v1h-11zM3 13h9v1h-9zM5 14h5v1h-5z" fill="#00e000"/><path d="M5 0h5v1h-5zM3 1h2v1h-2zM10 1h2v1h-2zM2 2h1v1h-1zM12 2h1v1h-1zM1 3h1v1h-1zM13 3h1v1h-1zM1 4h1v1h-1zM13 4h1v1h-1zM0 5h1v1h-1zM14 5h1v1h-1zM0 6h1v1h-1zM14 6h1v1h-1zM0 7h1v1h-1zM14 7h1v1h-1zM0 8h1v1h-1zM14 8h1v1h-1zM0 9h1v1h-1zM14 9h1v1h-1zM1 10h1v1h-1zM13 10h1v1h-1zM1 11h1v1h-1zM13 11h1v1h-1zM2 12h1v1h-1zM12 12h1v1h-1zM3 13h2v1h-2zM10 13h2v1h-2zM5 14h5v1h-5z" fill="#000"/><path d="M7 4h2v1h-2zM6 5h2v1h-2zM5 6h2v1h-2zM4 7h2v1h-2z" fill="#fff"/></svg>
<svg class="abs" style="left:707px;top:112px" width="15" height="15" shape-rendering="crispEdges"><path d="M5 0h5v1h-5zM3 1h9v1h-9zM2 2h11v1h-11zM1 3h13v1h-13zM1 4h13v1h-13zM0 5h15v1h-15zM0 6h15v1h-15zM0 7h15v1h-15zM0 8h15v1h-15zM0 9h15v1h-15zM1 10h13v1h-13zM1 11h13v1h-13zM2 12h11v1h-11zM3 13h9v1h-9zM5 14h5v1h-5z" fill="#ff9a00"/><path d="M5 0h5v1h-5zM3 1h2v1h-2zM10 1h2v1h-2zM2 2h1v1h-1zM12 2h1v1h-1zM1 3h1v1h-1zM13 3h1v1h-1zM1 4h1v1h-1zM13 4h1v1h-1zM0 5h1v1h-1zM14 5h1v1h-1zM0 6h1v1h-1zM14 6h1v1h-1zM0 7h1v1h-1zM14 7h1v1h-1zM0 8h1v1h-1zM14 8h1v1h-1zM0 9h1v1h-1zM14 9h1v1h-1zM1 10h1v1h-1zM13 10h1v1h-1zM1 11h1v1h-1zM13 11h1v1h-1zM2 12h1v1h-1zM12 12h1v1h-1zM3 13h2v1h-2zM10 13h2v1h-2zM5 14h5v1h-5z" fill="#000"/><path d="M7 4h2v1h-2zM6 5h2v1h-2zM5 6h2v1h-2zM4 7h2v1h-2z" fill="#fff"/></svg>
<svg class="abs" style="left:606px;top:144px" width="12" height="12" shape-rendering="crispEdges"><path d="M4 0h4v1h-4zM2 1h2v1h-2zM8 1h2v1h-2zM1 2h1v2h-1zM0 4h1v4h-1zM1 8h1v2h-1z" fill="#808080"/><path d="M4 1h4v1h-4zM2 2h2v1h-2zM8 2h2v1h-2zM2 3h1v1h-1zM1 4h1v4h-1zM2 8h1v1h-1z" fill="#404040"/><path d="M10 2h1v2h-1zM11 4h1v4h-1zM10 8h1v2h-1zM8 10h2v1h-2zM2 10h2v1h-2zM4 11h4v1h-4z" fill="#fff"/><path d="M9 3h1v1h-1zM10 4h1v4h-1zM9 8h1v1h-1zM8 9h1v1h-1zM3 9h1v1h-1zM4 10h4v1h-4zM2 9h1v1h-1z" fill="#d4d0c8"/><path d="M4 2h4v1h-4zM3 3h6v1h-6zM2 4h8v4h-8zM3 8h6v1h-6zM4 9h4v1h-4z" fill="#fff"/><path d="M5 4h2v1h-2zM4 5h4v2h-4zM5 7h2v1h-2z" fill="#000"/></svg>
<svg class="abs" style="left:696px;top:144px" width="12" height="12" shape-rendering="crispEdges"><path d="M4 0h4v1h-4zM2 1h2v1h-2zM8 1h2v1h-2zM1 2h1v2h-1zM0 4h1v4h-1zM1 8h1v2h-1z" fill="#808080"/><path d="M4 1h4v1h-4zM2 2h2v1h-2zM8 2h2v1h-2zM2 3h1v1h-1zM1 4h1v4h-1zM2 8h1v1h-1z" fill="#404040"/><path d="M10 2h1v2h-1zM11 4h1v4h-1zM10 8h1v2h-1zM8 10h2v1h-2zM2 10h2v1h-2zM4 11h4v1h-4z" fill="#fff"/><path d="M9 3h1v1h-1zM10 4h1v4h-1zM9 8h1v1h-1zM8 9h1v1h-1zM3 9h1v1h-1zM4 10h4v1h-4zM2 9h1v1h-1z" fill="#d4d0c8"/><path d="M4 2h4v1h-4zM3 3h6v1h-6zM2 4h8v4h-8zM3 8h6v1h-6zM4 9h4v1h-4z" fill="#fff"/></svg>
<div class="sunk" style="left:567px;top:218px;width:176px;height:20px;overflow:hidden;"><i></i></div>
<div class="sunk" style="left:567px;top:240px;width:176px;height:20px;"><i></i></div>
<div class="sunk" style="left:567px;top:262px;width:86px;height:20px;"><i></i></div>
<div class="sunk" style="left:658px;top:262px;width:86px;height:20px;"><i></i></div>
<svg class="abs" style="left:537px;top:292px" width="15" height="15" shape-rendering="crispEdges"><path d="M5 0h5v1h-5zM3 1h9v1h-9zM2 2h11v1h-11zM1 3h13v1h-13zM1 4h13v1h-13zM0 5h15v1h-15zM0 6h15v1h-15zM0 7h15v1h-15zM0 8h15v1h-15zM0 9h15v1h-15zM1 10h13v1h-13zM1 11h13v1h-13zM2 12h11v1h-11zM3 13h9v1h-9zM5 14h5v1h-5z" fill="#ff0000"/><path d="M5 0h5v1h-5zM3 1h2v1h-2zM10 1h2v1h-2zM2 2h1v1h-1zM12 2h1v1h-1zM1 3h1v1h-1zM13 3h1v1h-1zM1 4h1v1h-1zM13 4h1v1h-1zM0 5h1v1h-1zM14 5h1v1h-1zM0 6h1v1h-1zM14 6h1v1h-1zM0 7h1v1h-1zM14 7h1v1h-1zM0 8h1v1h-1zM14 8h1v1h-1zM0 9h1v1h-1zM14 9h1v1h-1zM1 10h1v1h-1zM13 10h1v1h-1zM1 11h1v1h-1zM13 11h1v1h-1zM2 12h1v1h-1zM12 12h1v1h-1zM3 13h2v1h-2zM10 13h2v1h-2zM5 14h5v1h-5z" fill="#000"/><path d="M7 4h2v1h-2zM6 5h2v1h-2zM5 6h2v1h-2zM4 7h2v1h-2z" fill="#fff"/></svg>
<svg class="abs" style="left:622px;top:292px" width="15" height="15" shape-rendering="crispEdges"><path d="M5 0h5v1h-5zM3 1h9v1h-9zM2 2h11v1h-11zM1 3h13v1h-13zM1 4h13v1h-13zM0 5h15v1h-15zM0 6h15v1h-15zM0 7h15v1h-15zM0 8h15v1h-15zM0 9h15v1h-15zM1 10h13v1h-13zM1 11h13v1h-13zM2 12h11v1h-11zM3 13h9v1h-9zM5 14h5v1h-5z" fill="#f0f000"/><path d="M5 0h5v1h-5zM3 1h2v1h-2zM10 1h2v1h-2zM2 2h1v1h-1zM12 2h1v1h-1zM1 3h1v1h-1zM13 3h1v1h-1zM1 4h1v1h-1zM13 4h1v1h-1zM0 5h1v1h-1zM14 5h1v1h-1zM0 6h1v1h-1zM14 6h1v1h-1zM0 7h1v1h-1zM14 7h1v1h-1zM0 8h1v1h-1zM14 8h1v1h-1zM0 9h1v1h-1zM14 9h1v1h-1zM1 10h1v1h-1zM13 10h1v1h-1zM1 11h1v1h-1zM13 11h1v1h-1zM2 12h1v1h-1zM12 12h1v1h-1zM3 13h2v1h-2zM10 13h2v1h-2zM5 14h5v1h-5z" fill="#000"/><path d="M7 4h2v1h-2zM6 5h2v1h-2zM5 6h2v1h-2zM4 7h2v1h-2z" fill="#fff"/></svg>
<svg class="abs" style="left:707px;top:292px" width="15" height="15" shape-rendering="crispEdges"><path d="M5 0h5v1h-5zM3 1h9v1h-9zM2 2h11v1h-11zM1 3h13v1h-13zM1 4h13v1h-13zM0 5h15v1h-15zM0 6h15v1h-15zM0 7h15v1h-15zM0 8h15v1h-15zM0 9h15v1h-15zM1 10h13v1h-13zM1 11h13v1h-13zM2 12h11v1h-11zM3 13h9v1h-9zM5 14h5v1h-5z" fill="#20e0f0"/><path d="M5 0h5v1h-5zM3 1h2v1h-2zM10 1h2v1h-2zM2 2h1v1h-1zM12 2h1v1h-1zM1 3h1v1h-1zM13 3h1v1h-1zM1 4h1v1h-1zM13 4h1v1h-1zM0 5h1v1h-1zM14 5h1v1h-1zM0 6h1v1h-1zM14 6h1v1h-1zM0 7h1v1h-1zM14 7h1v1h-1zM0 8h1v1h-1zM14 8h1v1h-1zM0 9h1v1h-1zM14 9h1v1h-1zM1 10h1v1h-1zM13 10h1v1h-1zM1 11h1v1h-1zM13 11h1v1h-1zM2 12h1v1h-1zM12 12h1v1h-1zM3 13h2v1h-2zM10 13h2v1h-2zM5 14h5v1h-5z" fill="#000"/><path d="M7 4h2v1h-2zM6 5h2v1h-2zM5 6h2v1h-2zM4 7h2v1h-2z" fill="#fff"/></svg>
<svg class="abs" style="left:606px;top:324px" width="12" height="12" shape-rendering="crispEdges"><path d="M4 0h4v1h-4zM2 1h2v1h-2zM8 1h2v1h-2zM1 2h1v2h-1zM0 4h1v4h-1zM1 8h1v2h-1z" fill="#808080"/><path d="M4 1h4v1h-4zM2 2h2v1h-2zM8 2h2v1h-2zM2 3h1v1h-1zM1 4h1v4h-1zM2 8h1v1h-1z" fill="#404040"/><path d="M10 2h1v2h-1zM11 4h1v4h-1zM10 8h1v2h-1zM8 10h2v1h-2zM2 10h2v1h-2zM4 11h4v1h-4z" fill="#fff"/><path d="M9 3h1v1h-1zM10 4h1v4h-1zM9 8h1v1h-1zM8 9h1v1h-1zM3 9h1v1h-1zM4 10h4v1h-4zM2 9h1v1h-1z" fill="#d4d0c8"/><path d="M4 2h4v1h-4zM3 3h6v1h-6zM2 4h8v4h-8zM3 8h6v1h-6zM4 9h4v1h-4z" fill="#fff"/><path d="M5 4h2v1h-2zM4 5h4v2h-4zM5 7h2v1h-2z" fill="#000"/></svg>
<svg class="abs" style="left:696px;top:324px" width="12" height="12" shape-rendering="crispEdges"><path d="M4 0h4v1h-4zM2 1h2v1h-2zM8 1h2v1h-2zM1 2h1v2h-1zM0 4h1v4h-1zM1 8h1v2h-1z" fill="#808080"/><path d="M4 1h4v1h-4zM2 2h2v1h-2zM8 2h2v1h-2zM2 3h1v1h-1zM1 4h1v4h-1zM2 8h1v1h-1z" fill="#404040"/><path d="M10 2h1v2h-1zM11 4h1v4h-1zM10 8h1v2h-1zM8 10h2v1h-2zM2 10h2v1h-2zM4 11h4v1h-4z" fill="#fff"/><path d="M9 3h1v1h-1zM10 4h1v4h-1zM9 8h1v1h-1zM8 9h1v1h-1zM3 9h1v1h-1zM4 10h4v1h-4zM2 9h1v1h-1z" fill="#d4d0c8"/><path d="M4 2h4v1h-4zM3 3h6v1h-6zM2 4h8v4h-8zM3 8h6v1h-6zM4 9h4v1h-4z" fill="#fff"/></svg>

<!-- burn -->
<svg class="abs" style="left:48px;top:495px" width="448" height="23" shape-rendering="crispEdges"><rect x="0" y="0" width="448" height="23" fill="#fff"/><rect x="0" y="0" width="447" height="22" fill="#808080"/><rect x="1" y="1" width="446" height="21" fill="#d4d0c8"/><rect x="1" y="1" width="445" height="20" fill="#404040"/><rect x="2" y="2" width="444" height="19" fill="#000"/><path d="M5 4h1v14h-1zM7 4h1v14h-1zM9 4h1v14h-1zM11 4h1v14h-1zM13 4h1v14h-1zM16 4h1v14h-1zM18 4h1v14h-1zM20 4h1v14h-1zM22 4h1v14h-1zM24 4h1v14h-1zM27 4h1v14h-1zM29 4h1v14h-1zM31 4h1v14h-1zM33 4h1v14h-1zM35 4h1v14h-1zM38 4h1v14h-1zM40 4h1v14h-1zM42 4h1v14h-1zM44 4h1v14h-1zM46 4h1v14h-1zM49 4h1v14h-1zM51 4h1v14h-1zM53 4h1v14h-1zM55 4h1v14h-1zM57 4h1v14h-1zM60 4h1v14h-1zM62 4h1v14h-1zM64 4h1v14h-1zM66 4h1v14h-1zM68 4h1v14h-1zM71 4h1v14h-1zM73 4h1v14h-1zM75 4h1v14h-1zM77 4h1v14h-1zM79 4h1v14h-1zM82 4h1v14h-1zM84 4h1v14h-1zM86 4h1v14h-1zM88 4h1v14h-1zM90 4h1v14h-1zM93 4h1v14h-1zM95 4h1v14h-1zM97 4h1v14h-1zM99 4h1v14h-1zM101 4h1v14h-1zM104 4h1v14h-1zM106 4h1v14h-1zM108 4h1v14h-1zM110 4h1v14h-1zM112 4h1v14h-1zM115 4h1v14h-1zM117 4h1v14h-1zM119 4h1v14h-1zM121 4h1v14h-1zM123 4h1v14h-1zM126 4h1v14h-1zM128 4h1v14h-1zM130 4h1v14h-1zM132 4h1v14h-1zM134 4h1v14h-1zM137 4h1v14h-1zM139 4h1v14h-1zM141 4h1v14h-1zM143 4h1v14h-1zM145 4h1v14h-1zM148 4h1v14h-1zM150 4h1v14h-1zM152 4h1v14h-1zM154 4h1v14h-1zM156 4h1v14h-1zM159 4h1v14h-1zM161 4h1v14h-1zM163 4h1v14h-1zM165 4h1v14h-1zM167 4h1v14h-1zM170 4h1v14h-1zM172 4h1v14h-1zM174 4h1v14h-1zM176 4h1v14h-1zM178 4h1v14h-1zM181 4h1v14h-1zM183 4h1v14h-1zM185 4h1v14h-1zM187 4h1v14h-1zM189 4h1v14h-1zM192 4h1v14h-1zM194 4h1v14h-1zM196 4h1v14h-1zM198 4h1v14h-1zM200 4h1v14h-1zM203 4h1v14h-1zM205 4h1v14h-1zM207 4h1v14h-1zM209 4h1v14h-1zM211 4h1v14h-1zM214 4h1v14h-1zM216 4h1v14h-1zM218 4h1v14h-1zM220 4h1v14h-1zM222 4h1v14h-1zM225 4h1v14h-1zM227 4h1v14h-1zM229 4h1v14h-1zM231 4h1v14h-1zM233 4h1v14h-1zM236 4h1v14h-1zM238 4h1v14h-1zM240 4h1v14h-1zM242 4h1v14h-1zM244 4h1v14h-1zM247 4h1v14h-1zM249 4h1v14h-1zM251 4h1v14h-1zM253 4h1v14h-1zM255 4h1v14h-1zM258 4h1v14h-1zM260 4h1v14h-1zM262 4h1v14h-1zM264 4h1v14h-1zM266 4h1v14h-1zM269 4h1v14h-1zM271 4h1v14h-1zM273 4h1v14h-1zM275 4h1v14h-1zM277 4h1v14h-1zM280 4h1v14h-1zM282 4h1v14h-1zM284 4h1v14h-1zM286 4h1v14h-1zM288 4h1v14h-1zM291 4h1v14h-1zM293 4h1v14h-1zM295 4h1v14h-1zM297 4h1v14h-1zM299 4h1v14h-1zM302 4h1v14h-1zM304 4h1v14h-1zM306 4h1v14h-1zM308 4h1v14h-1zM310 4h1v14h-1zM313 4h1v14h-1zM315 4h1v14h-1zM317 4h1v14h-1zM319 4h1v14h-1zM321 4h1v14h-1zM324 4h1v14h-1zM326 4h1v14h-1zM328 4h1v14h-1zM330 4h1v14h-1zM332 4h1v14h-1zM335 4h1v14h-1zM337 4h1v14h-1zM339 4h1v14h-1zM341 4h1v14h-1zM343 4h1v14h-1zM346 4h1v14h-1zM348 4h1v14h-1zM350 4h1v14h-1zM352 4h1v14h-1zM354 4h1v14h-1zM357 4h1v14h-1zM359 4h1v14h-1zM361 4h1v14h-1zM363 4h1v14h-1zM365 4h1v14h-1zM368 4h1v14h-1zM370 4h1v14h-1zM372 4h1v14h-1zM374 4h1v14h-1zM376 4h1v14h-1zM379 4h1v14h-1zM381 4h1v14h-1zM383 4h1v14h-1zM385 4h1v14h-1zM387 4h1v14h-1zM390 4h1v14h-1zM392 4h1v14h-1zM394 4h1v14h-1zM396 4h1v14h-1zM398 4h1v14h-1zM401 4h1v14h-1zM403 4h1v14h-1zM405 4h1v14h-1zM407 4h1v14h-1zM409 4h1v14h-1zM412 4h1v14h-1zM414 4h1v14h-1zM416 4h1v14h-1zM418 4h1v14h-1zM420 4h1v14h-1zM423 4h1v14h-1zM425 4h1v14h-1zM427 4h1v14h-1zM429 4h1v14h-1zM431 4h1v14h-1zM434 4h1v14h-1zM436 4h1v14h-1zM438 4h1v14h-1zM440 4h1v14h-1zM442 4h1v14h-1z" fill="#0b5a6e"/><path d="M5 4h1v2h-1zM7 4h1v2h-1zM9 4h1v2h-1zM9 6h1v2h-1zM9 8h1v2h-1zM9 10h1v2h-1zM9 12h1v2h-1zM9 14h1v2h-1zM9 16h1v2h-1zM11 4h1v2h-1zM13 4h1v2h-1zM16 10h1v2h-1zM16 12h1v2h-1zM16 14h1v2h-1zM18 8h1v2h-1zM18 12h1v2h-1zM18 16h1v2h-1zM20 8h1v2h-1zM20 12h1v2h-1zM20 16h1v2h-1zM22 8h1v2h-1zM22 12h1v2h-1zM22 16h1v2h-1zM24 10h1v2h-1zM24 12h1v2h-1zM27 10h1v2h-1zM27 16h1v2h-1zM29 8h1v2h-1zM29 12h1v2h-1zM29 16h1v2h-1zM31 8h1v2h-1zM31 12h1v2h-1zM31 16h1v2h-1zM33 8h1v2h-1zM33 12h1v2h-1zM33 16h1v2h-1zM35 14h1v2h-1zM38 8h1v2h-1zM40 4h1v2h-1zM40 6h1v2h-1zM40 8h1v2h-1zM40 10h1v2h-1zM40 12h1v2h-1zM40 14h1v2h-1zM42 8h1v2h-1zM42 16h1v2h-1zM44 16h1v2h-1zM46 14h1v2h-1zM60 6h1v2h-1zM60 8h1v2h-1zM60 10h1v2h-1zM60 12h1v2h-1zM60 14h1v2h-1zM62 4h1v2h-1zM62 16h1v2h-1zM64 4h1v2h-1zM64 16h1v2h-1zM66 4h1v2h-1zM66 16h1v2h-1zM68 6h1v2h-1zM68 14h1v2h-1zM71 10h1v2h-1zM71 12h1v2h-1zM71 14h1v2h-1zM73 8h1v2h-1zM73 16h1v2h-1zM75 8h1v2h-1zM75 16h1v2h-1zM77 8h1v2h-1zM77 16h1v2h-1zM79 10h1v2h-1zM79 12h1v2h-1zM79 14h1v2h-1zM82 8h1v2h-1zM82 10h1v2h-1zM82 12h1v2h-1zM82 14h1v2h-1zM82 16h1v2h-1zM84 8h1v2h-1zM86 10h1v2h-1zM86 12h1v2h-1zM88 8h1v2h-1zM90 10h1v2h-1zM90 12h1v2h-1zM90 14h1v2h-1zM90 16h1v2h-1zM93 8h1v2h-1zM93 10h1v2h-1zM93 12h1v2h-1zM93 14h1v2h-1zM93 16h1v2h-1zM95 8h1v2h-1zM95 12h1v2h-1zM97 8h1v2h-1zM97 12h1v2h-1zM99 8h1v2h-1zM99 12h1v2h-1zM101 10h1v2h-1zM106 4h1v2h-1zM106 16h1v2h-1zM108 4h1v2h-1zM108 6h1v2h-1zM108 8h1v2h-1zM108 10h1v2h-1zM108 12h1v2h-1zM108 14h1v2h-1zM108 16h1v2h-1zM110 16h1v2h-1zM115 10h1v2h-1zM115 12h1v2h-1zM115 14h1v2h-1zM117 8h1v2h-1zM117 12h1v2h-1zM117 16h1v2h-1zM119 8h1v2h-1zM119 12h1v2h-1zM119 16h1v2h-1zM121 8h1v2h-1zM121 12h1v2h-1zM121 16h1v2h-1zM123 10h1v2h-1zM123 12h1v2h-1zM126 8h1v2h-1zM128 4h1v2h-1zM128 6h1v2h-1zM128 8h1v2h-1zM128 10h1v2h-1zM128 12h1v2h-1zM128 14h1v2h-1zM130 8h1v2h-1zM130 16h1v2h-1zM132 16h1v2h-1zM134 14h1v2h-1zM137 10h1v2h-1zM137 12h1v2h-1zM137 14h1v2h-1zM139 8h1v2h-1zM139 12h1v2h-1zM139 16h1v2h-1zM141 8h1v2h-1zM141 12h1v2h-1zM141 16h1v2h-1zM143 8h1v2h-1zM143 12h1v2h-1zM143 16h1v2h-1zM145 10h1v2h-1zM145 12h1v2h-1zM161 8h1v2h-1zM161 16h1v2h-1zM163 4h1v2h-1zM163 8h1v2h-1zM163 10h1v2h-1zM163 12h1v2h-1zM163 14h1v2h-1zM163 16h1v2h-1zM165 16h1v2h-1zM170 8h1v2h-1zM170 10h1v2h-1zM170 12h1v2h-1zM170 14h1v2h-1zM170 16h1v2h-1zM172 10h1v2h-1zM174 8h1v2h-1zM176 8h1v2h-1zM178 10h1v2h-1zM178 12h1v2h-1zM178 14h1v2h-1zM178 16h1v2h-1zM192 6h1v2h-1zM192 8h1v2h-1zM192 10h1v2h-1zM192 12h1v2h-1zM192 14h1v2h-1zM194 4h1v2h-1zM194 12h1v2h-1zM194 16h1v2h-1zM196 4h1v2h-1zM196 10h1v2h-1zM196 16h1v2h-1zM198 4h1v2h-1zM198 8h1v2h-1zM198 16h1v2h-1zM200 6h1v2h-1zM200 8h1v2h-1zM200 10h1v2h-1zM200 12h1v2h-1zM200 14h1v2h-1zM203 6h1v2h-1zM203 8h1v2h-1zM203 14h1v2h-1zM205 4h1v2h-1zM205 10h1v2h-1zM205 16h1v2h-1zM207 4h1v2h-1zM207 10h1v2h-1zM207 16h1v2h-1zM209 4h1v2h-1zM209 10h1v2h-1zM209 16h1v2h-1zM211 6h1v2h-1zM211 8h1v2h-1zM211 10h1v2h-1zM211 12h1v2h-1zM211 14h1v2h-1zM216 6h1v2h-1zM216 8h1v2h-1zM216 12h1v2h-1zM216 14h1v2h-1zM218 6h1v2h-1zM218 8h1v2h-1zM218 12h1v2h-1zM218 14h1v2h-1zM225 10h1v2h-1zM225 12h1v2h-1zM227 8h1v2h-1zM227 12h1v2h-1zM229 6h1v2h-1zM229 12h1v2h-1zM231 4h1v2h-1zM231 6h1v2h-1zM231 8h1v2h-1zM231 10h1v2h-1zM231 12h1v2h-1zM231 14h1v2h-1zM231 16h1v2h-1zM233 12h1v2h-1zM238 6h1v2h-1zM238 16h1v2h-1zM240 4h1v2h-1zM240 6h1v2h-1zM240 8h1v2h-1zM240 10h1v2h-1zM240 12h1v2h-1zM240 14h1v2h-1zM240 16h1v2h-1zM242 16h1v2h-1z" fill="#10d8ff"/></svg>
<svg class="abs" style="left:48px;top:520px" width="448" height="23" shape-rendering="crispEdges"><rect x="0" y="0" width="448" height="23" fill="#fff"/><rect x="0" y="0" width="447" height="22" fill="#808080"/><rect x="1" y="1" width="446" height="21" fill="#d4d0c8"/><rect x="1" y="1" width="445" height="20" fill="#404040"/><rect x="2" y="2" width="444" height="19" fill="#000"/><path d="M5 4h1v14h-1zM7 4h1v14h-1zM9 4h1v14h-1zM11 4h1v14h-1zM13 4h1v14h-1zM16 4h1v14h-1zM18 4h1v14h-1zM20 4h1v14h-1zM22 4h1v14h-1zM24 4h1v14h-1zM27 4h1v14h-1zM29 4h1v14h-1zM31 4h1v14h-1zM33 4h1v14h-1zM35 4h1v14h-1zM38 4h1v14h-1zM40 4h1v14h-1zM42 4h1v14h-1zM44 4h1v14h-1zM46 4h1v14h-1zM49 4h1v14h-1zM51 4h1v14h-1zM53 4h1v14h-1zM55 4h1v14h-1zM57 4h1v14h-1zM60 4h1v14h-1zM62 4h1v14h-1zM64 4h1v14h-1zM66 4h1v14h-1zM68 4h1v14h-1zM71 4h1v14h-1zM73 4h1v14h-1zM75 4h1v14h-1zM77 4h1v14h-1zM79 4h1v14h-1zM82 4h1v14h-1zM84 4h1v14h-1zM86 4h1v14h-1zM88 4h1v14h-1zM90 4h1v14h-1zM93 4h1v14h-1zM95 4h1v14h-1zM97 4h1v14h-1zM99 4h1v14h-1zM101 4h1v14h-1zM104 4h1v14h-1zM106 4h1v14h-1zM108 4h1v14h-1zM110 4h1v14h-1zM112 4h1v14h-1zM115 4h1v14h-1zM117 4h1v14h-1zM119 4h1v14h-1zM121 4h1v14h-1zM123 4h1v14h-1zM126 4h1v14h-1zM128 4h1v14h-1zM130 4h1v14h-1zM132 4h1v14h-1zM134 4h1v14h-1zM137 4h1v14h-1zM139 4h1v14h-1zM141 4h1v14h-1zM143 4h1v14h-1zM145 4h1v14h-1zM148 4h1v14h-1zM150 4h1v14h-1zM152 4h1v14h-1zM154 4h1v14h-1zM156 4h1v14h-1zM159 4h1v14h-1zM161 4h1v14h-1zM163 4h1v14h-1zM165 4h1v14h-1zM167 4h1v14h-1zM170 4h1v14h-1zM172 4h1v14h-1zM174 4h1v14h-1zM176 4h1v14h-1zM178 4h1v14h-1zM181 4h1v14h-1zM183 4h1v14h-1zM185 4h1v14h-1zM187 4h1v14h-1zM189 4h1v14h-1zM192 4h1v14h-1zM194 4h1v14h-1zM196 4h1v14h-1zM198 4h1v14h-1zM200 4h1v14h-1zM203 4h1v14h-1zM205 4h1v14h-1zM207 4h1v14h-1zM209 4h1v14h-1zM211 4h1v14h-1zM214 4h1v14h-1zM216 4h1v14h-1zM218 4h1v14h-1zM220 4h1v14h-1zM222 4h1v14h-1zM225 4h1v14h-1zM227 4h1v14h-1zM229 4h1v14h-1zM231 4h1v14h-1zM233 4h1v14h-1zM236 4h1v14h-1zM238 4h1v14h-1zM240 4h1v14h-1zM242 4h1v14h-1zM244 4h1v14h-1zM247 4h1v14h-1zM249 4h1v14h-1zM251 4h1v14h-1zM253 4h1v14h-1zM255 4h1v14h-1zM258 4h1v14h-1zM260 4h1v14h-1zM262 4h1v14h-1zM264 4h1v14h-1zM266 4h1v14h-1zM269 4h1v14h-1zM271 4h1v14h-1zM273 4h1v14h-1zM275 4h1v14h-1zM277 4h1v14h-1zM280 4h1v14h-1zM282 4h1v14h-1zM284 4h1v14h-1zM286 4h1v14h-1zM288 4h1v14h-1zM291 4h1v14h-1zM293 4h1v14h-1zM295 4h1v14h-1zM297 4h1v14h-1zM299 4h1v14h-1zM302 4h1v14h-1zM304 4h1v14h-1zM306 4h1v14h-1zM308 4h1v14h-1zM310 4h1v14h-1zM313 4h1v14h-1zM315 4h1v14h-1zM317 4h1v14h-1zM319 4h1v14h-1zM321 4h1v14h-1zM324 4h1v14h-1zM326 4h1v14h-1zM328 4h1v14h-1zM330 4h1v14h-1zM332 4h1v14h-1zM335 4h1v14h-1zM337 4h1v14h-1zM339 4h1v14h-1zM341 4h1v14h-1zM343 4h1v14h-1zM346 4h1v14h-1zM348 4h1v14h-1zM350 4h1v14h-1zM352 4h1v14h-1zM354 4h1v14h-1zM357 4h1v14h-1zM359 4h1v14h-1zM361 4h1v14h-1zM363 4h1v14h-1zM365 4h1v14h-1zM368 4h1v14h-1zM370 4h1v14h-1zM372 4h1v14h-1zM374 4h1v14h-1zM376 4h1v14h-1zM379 4h1v14h-1zM381 4h1v14h-1zM383 4h1v14h-1zM385 4h1v14h-1zM387 4h1v14h-1zM390 4h1v14h-1zM392 4h1v14h-1zM394 4h1v14h-1zM396 4h1v14h-1zM398 4h1v14h-1zM401 4h1v14h-1zM403 4h1v14h-1zM405 4h1v14h-1zM407 4h1v14h-1zM409 4h1v14h-1zM412 4h1v14h-1zM414 4h1v14h-1zM416 4h1v14h-1zM418 4h1v14h-1zM420 4h1v14h-1zM423 4h1v14h-1zM425 4h1v14h-1zM427 4h1v14h-1zM429 4h1v14h-1zM431 4h1v14h-1zM434 4h1v14h-1zM436 4h1v14h-1zM438 4h1v14h-1zM440 4h1v14h-1zM442 4h1v14h-1z" fill="#0b5a6e"/><path d="M5 4h1v2h-1zM7 4h1v2h-1zM9 4h1v2h-1zM9 6h1v2h-1zM9 8h1v2h-1zM9 10h1v2h-1zM9 12h1v2h-1zM9 14h1v2h-1zM9 16h1v2h-1zM11 4h1v2h-1zM13 4h1v2h-1zM16 10h1v2h-1zM16 12h1v2h-1zM16 14h1v2h-1zM18 8h1v2h-1zM18 12h1v2h-1zM18 16h1v2h-1zM20 8h1v2h-1zM20 12h1v2h-1zM20 16h1v2h-1zM22 8h1v2h-1zM22 12h1v2h-1zM22 16h1v2h-1zM24 10h1v2h-1zM24 12h1v2h-1zM27 10h1v2h-1zM27 16h1v2h-1zM29 8h1v2h-1zM29 12h1v2h-1zM29 16h1v2h-1zM31 8h1v2h-1zM31 12h1v2h-1zM31 16h1v2h-1zM33 8h1v2h-1zM33 12h1v2h-1zM33 16h1v2h-1zM35 14h1v2h-1zM38 8h1v2h-1zM40 4h1v2h-1zM40 6h1v2h-1zM40 8h1v2h-1zM40 10h1v2h-1zM40 12h1v2h-1zM40 14h1v2h-1zM42 8h1v2h-1zM42 16h1v2h-1zM44 16h1v2h-1zM46 14h1v2h-1zM60 6h1v2h-1zM60 8h1v2h-1zM60 10h1v2h-1zM60 12h1v2h-1zM60 14h1v2h-1zM62 4h1v2h-1zM62 16h1v2h-1zM64 4h1v2h-1zM64 16h1v2h-1zM66 4h1v2h-1zM66 16h1v2h-1zM68 6h1v2h-1zM68 14h1v2h-1zM71 10h1v2h-1zM71 12h1v2h-1zM71 14h1v2h-1zM73 8h1v2h-1zM73 16h1v2h-1zM75 8h1v2h-1zM75 16h1v2h-1zM77 8h1v2h-1zM77 16h1v2h-1zM79 10h1v2h-1zM79 12h1v2h-1zM79 14h1v2h-1zM82 8h1v2h-1zM82 10h1v2h-1zM82 12h1v2h-1zM82 14h1v2h-1zM82 16h1v2h-1zM84 8h1v2h-1zM86 10h1v2h-1zM86 12h1v2h-1zM88 8h1v2h-1zM90 10h1v2h-1zM90 12h1v2h-1zM90 14h1v2h-1zM90 16h1v2h-1zM93 8h1v2h-1zM93 10h1v2h-1zM93 12h1v2h-1zM93 14h1v2h-1zM93 16h1v2h-1zM95 8h1v2h-1zM95 12h1v2h-1zM97 8h1v2h-1zM97 12h1v2h-1zM99 8h1v2h-1zM99 12h1v2h-1zM101 10h1v2h-1zM106 4h1v2h-1zM106 16h1v2h-1zM108 4h1v2h-1zM108 6h1v2h-1zM108 8h1v2h-1zM108 10h1v2h-1zM108 12h1v2h-1zM108 14h1v2h-1zM108 16h1v2h-1zM110 16h1v2h-1zM115 10h1v2h-1zM115 12h1v2h-1zM115 14h1v2h-1zM117 8h1v2h-1zM117 12h1v2h-1zM117 16h1v2h-1zM119 8h1v2h-1zM119 12h1v2h-1zM119 16h1v2h-1zM121 8h1v2h-1zM121 12h1v2h-1zM121 16h1v2h-1zM123 10h1v2h-1zM123 12h1v2h-1zM126 8h1v2h-1zM128 4h1v2h-1zM128 6h1v2h-1zM128 8h1v2h-1zM128 10h1v2h-1zM128 12h1v2h-1zM128 14h1v2h-1zM130 8h1v2h-1zM130 16h1v2h-1zM132 16h1v2h-1zM134 14h1v2h-1zM137 10h1v2h-1zM137 12h1v2h-1zM137 14h1v2h-1zM139 8h1v2h-1zM139 12h1v2h-1zM139 16h1v2h-1zM141 8h1v2h-1zM141 12h1v2h-1zM141 16h1v2h-1zM143 8h1v2h-1zM143 12h1v2h-1zM143 16h1v2h-1zM145 10h1v2h-1zM145 12h1v2h-1z" fill="#10d8ff"/></svg>
<div class="btn" style="left:503px;top:494px;width:66px;height:22px;"><i></i></div>
<div class="btn" style="left:503px;top:522px;width:66px;height:22px;"><i></i></div>

<!-- group box -->
<div class="abs" style="left:579px;top:421px;width:158px;height:124px;box-sizing:border-box;border:1px solid #808080;"></div>
<div class="abs" style="left:580px;top:422px;width:158px;height:124px;box-sizing:border-box;border:1px solid #fff;"></div>
<div class="abs" style="left:579px;top:421px;width:158px;height:124px;box-sizing:border-box;border:1px solid #808080;border-right:none;border-bottom:none;"></div>
<svg class="abs" style="left:614px;top:462px" width="32" height="28">
<g shape-rendering="crispEdges">
<rect x="4" y="8" width="24" height="16" fill="#5a5a5a"/>
<rect x="3" y="7" width="24" height="16" fill="#f2f2f2"/>
<rect x="5" y="5" width="3" height="2" fill="#d0d0d0"/><rect x="7" y="5" width="1" height="2" fill="#3a3a3a"/>
<rect x="3" y="7" width="24" height="1" fill="#e4e4e4"/>
<path d="M4 10h1v1h-1zM6 10h1v1h-1zM8 10h1v1h-1zM5 11h1v1h-1zM7 11h1v1h-1zM4 12h1v1h-1zM6 12h1v1h-1zM8 12h1v1h-1zM5 13h1v1h-1zM7 13h1v1h-1zM4 14h1v1h-1zM6 14h1v1h-1zM8 14h1v1h-1zM5 15h1v1h-1zM7 15h1v1h-1zM4 16h1v1h-1zM6 16h1v1h-1zM8 16h1v1h-1zM5 17h1v1h-1zM7 17h1v1h-1zM4 18h1v1h-1zM6 18h1v1h-1zM8 18h1v1h-1zM5 19h1v1h-1zM7 19h1v1h-1zM4 20h1v1h-1zM6 20h1v1h-1zM8 20h1v1h-1zM5 21h1v1h-1zM7 21h1v1h-1zM22 10h1v1h-1zM24 10h1v1h-1zM26 10h1v1h-1zM23 11h1v1h-1zM25 11h1v1h-1zM22 12h1v1h-1zM24 12h1v1h-1zM26 12h1v1h-1zM23 13h1v1h-1zM25 13h1v1h-1zM22 14h1v1h-1zM24 14h1v1h-1zM26 14h1v1h-1zM23 15h1v1h-1zM25 15h1v1h-1zM22 16h1v1h-1zM24 16h1v1h-1zM26 16h1v1h-1zM23 17h1v1h-1zM25 17h1v1h-1zM22 18h1v1h-1zM24 18h1v1h-1zM26 18h1v1h-1zM23 19h1v1h-1zM25 19h1v1h-1zM22 20h1v1h-1zM24 20h1v1h-1zM26 20h1v1h-1zM23 21h1v1h-1zM25 21h1v1h-1z" fill="#bdbdbd"/>
</g>
<circle cx="15.6" cy="15.1" r="5" fill="#6a6a6a"/>
<circle cx="15.6" cy="15.3" r="3.9" fill="#9a9a9a"/>
<circle cx="15.3" cy="14.8" r="2.8" fill="#1e1e1e"/>
<circle cx="14.6" cy="14.4" r="0.9" fill="#fff"/>
</svg>
<svg class="abs" style="left:670px;top:460px" width="32" height="32">
<defs><linearGradient id="brd" x1="0" y1="0" x2="0" y2="1"><stop offset="0" stop-color="#d49a5c"/><stop offset="0.55" stop-color="#c98c50"/><stop offset="1" stop-color="#a9703e"/></linearGradient></defs>
<rect x="4.5" y="6" width="17" height="22" rx="1.5" fill="url(#brd)" stroke="#6e4524" stroke-width="1"/>
<path d="M10.5 8V6.2A2 2 0 0 1 12.5 4.2H14A2 2 0 0 1 16 6.2V8Z" fill="#e6e6e6" stroke="#7a7a7a" stroke-width="1"/>
<path d="M7 7.8H18.5Q19.5 7.8 19.5 8.8Q19.5 10.8 17.5 10.8H8Q6 10.8 6 8.8Q6 7.8 7 7.8Z" fill="#eeeeee" stroke="#7a7a7a" stroke-width="1"/>
<rect x="12" y="6.3" width="2.5" height="1.2" fill="#555"/>
<path d="M14.5 9.8H23.5L27.8 14.2V25.6H14.5Z" fill="#fbfbfb" stroke="#8c8c8c" stroke-width="1"/>
<path d="M23.5 9.8L27.8 14.2H23.5Z" fill="#3d96dc"/>
<g shape-rendering="crispEdges" fill="#c4c4c4"><rect x="16" y="12" width="6" height="2"/><rect x="16" y="15" width="9" height="2"/><rect x="16" y="18" width="9" height="2"/><rect x="16" y="21" width="9" height="2"/></g>
</svg>
<div class="t" style="left:3.95px;top:6px;transform:scaleX(1.0496);transform-origin:0 0;color:#fff;font-weight:bold;-webkit-text-stroke:0;">DVDInfoPro PIPO Compare</div>
<div class="t" style="left:4.00px;top:37px;">1280</div>
<div class="t" style="left:10.00px;top:77px;">960</div>
<div class="t" style="left:10.00px;top:117px;">640</div>
<div class="t" style="left:10.00px;top:157px;">320</div>
<div class="t" style="left:16.00px;top:197px;">20</div>
<div class="t" style="left:16.00px;top:237px;">15</div>
<div class="t" style="left:16.00px;top:277px;">10</div>
<div class="t" style="left:22.00px;top:317px;">5</div>
<div class="t" style="left:15.45px;top:357px;transform:scaleX(1.0455);transform-origin:0 0;">L9</div>
<div class="t" style="left:487.00px;top:198px;">20%</div>
<div class="t" style="left:487.00px;top:238px;">15%</div>
<div class="t" style="left:487.00px;top:278px;">10%</div>
<div class="t" style="left:487.00px;top:318px;">5%</div>
<div class="t" style="left:487.00px;top:358px;">R9</div>
<div class="t" style="left:123.05px;top:378px;transform:scaleX(0.9524);transform-origin:0 0;">1GB</div>
<div class="t" style="left:223.05px;top:378px;transform:scaleX(0.9524);transform-origin:0 0;">2GB</div>
<div class="t" style="left:323.05px;top:378px;transform:scaleX(0.9524);transform-origin:0 0;">3GB</div>
<div class="t" style="left:424.00px;top:378px;transform:scaleX(0.9091);transform-origin:0 0;">4GB</div>
<div class="t" style="left:45.06px;top:406px;transform:scaleX(0.9429);transform-origin:0 0;">PI Total</div>
<div class="t" style="left:41.00px;top:418px;">7748465</div>
<div class="t" style="left:110.58px;top:406px;transform:scaleX(0.9162);transform-origin:0 0;">PI Peak</div>
<div class="t" style="left:118.34px;top:418px;transform:scaleX(1.0647);transform-origin:0 0;">689</div>
<div class="t" style="left:172.57px;top:406px;transform:scaleX(1.0267);transform-origin:0 0;">PI Avg</div>
<div class="t" style="left:184.50px;top:418px;transform:scaleX(0.9278);transform-origin:0 0;">441</div>
<div class="t" style="left:235.55px;top:406px;transform:scaleX(0.9476);transform-origin:0 0;">PIF Total</div>
<div class="t" style="left:243.88px;top:418px;transform:scaleX(1.0172);transform-origin:0 0;">22646</div>
<div class="t" style="left:297.70px;top:406px;transform:scaleX(0.8977);transform-origin:0 0;">PIF Peak</div>
<div class="t" style="left:318.78px;top:418px;transform:scaleX(1.0182);transform-origin:0 0;">20</div>
<div class="t" style="left:373.71px;top:406px;transform:scaleX(0.9946);transform-origin:0 0;">PIF Avg</div>
<div class="t" style="left:387.44px;top:418px;transform:scaleX(1.1600);transform-origin:0 0;">2</div>
<div class="t" style="left:437.84px;top:406px;transform:scaleX(0.9617);transform-origin:0 0;">POF Total</div>
<div class="t" style="left:454.60px;top:418px;transform:scaleX(0.9333);transform-origin:0 0;">0</div>
<div class="t" style="left:45.03px;top:456px;transform:scaleX(0.9682);transform-origin:0 0;">PI Total 2</div>
<div class="t" style="left:46.70px;top:468px;">24507</div>
<div class="t" style="left:110.57px;top:456px;transform:scaleX(0.9283);transform-origin:0 0;">PI Peak 2</div>
<div class="t" style="left:118.34px;top:468px;transform:scaleX(1.0647);transform-origin:0 0;">120</div>
<div class="t" style="left:172.59px;top:456px;transform:scaleX(1.0103);transform-origin:0 0;">PI Avg 2</div>
<div class="t" style="left:186.24px;top:468px;transform:scaleX(1.0636);transform-origin:0 0;">68</div>
<div class="t" style="left:235.54px;top:456px;transform:scaleX(0.9562);transform-origin:0 0;">PIF Total2</div>
<div class="t" style="left:249.54px;top:468px;transform:scaleX(0.9588);transform-origin:0 0;">531</div>
<div class="t" style="left:297.67px;top:456px;transform:scaleX(0.9280);transform-origin:0 0;">PIF Peak2</div>
<div class="t" style="left:321.28px;top:468px;transform:scaleX(1.2200);transform-origin:0 0;">3</div>
<div class="t" style="left:373.70px;top:456px;">PIF Avg2</div>
<div class="t" style="left:387.74px;top:468px;transform:scaleX(0.8600);transform-origin:0 0;">1</div>
<div class="t" style="left:437.83px;top:456px;transform:scaleX(0.9732);transform-origin:0 0;">POF Total 2</div>
<div class="t" style="left:454.60px;top:468px;transform:scaleX(0.9333);transform-origin:0 0;">0</div>
<div class="t" style="left:11.67px;top:495px;transform:scaleX(1.0318);transform-origin:0 0;">Burn</div>
<div class="t" style="left:6.60px;top:508px;">Drive 1</div>
<div class="t" style="left:11.67px;top:520px;transform:scaleX(1.0318);transform-origin:0 0;">Burn</div>
<div class="t" style="left:6.60px;top:533px;">Drive 2</div>
<div class="t" style="left:511.75px;top:498px;transform:scaleX(0.9457);transform-origin:0 0;">Comment</div>
<div class="t" style="left:511.75px;top:526px;transform:scaleX(0.9457);transform-origin:0 0;">Comment</div>
<div class="t" style="left:587.02px;top:415px;transform:scaleX(0.9755);transform-origin:0 0;background:#d4d0c8;box-shadow:-2px 0 0 #d4d0c8,2px 0 0 #d4d0c8;">Snapshot &amp; Clipboard</div>
<div class="t" style="left:511.61px;top:43px;transform:scaleX(0.9880);transform-origin:0 0;">Scan Drv1</div>
<div class="t" style="left:511.87px;top:66px;transform:scaleX(0.9250);transform-origin:0 0;">MID Code</div>
<div class="t" style="left:513.20px;top:86px;transform:scaleX(0.9558);transform-origin:0 0;">Type/Book</div>
<div class="t" style="left:586.04px;top:86px;transform:scaleX(0.9574);transform-origin:0 0;">DVD+RW</div>
<div class="t" style="left:676.53px;top:86px;transform:scaleX(0.9745);transform-origin:0 0;">DVD+RW</div>
<div class="t" style="left:516.88px;top:127px;transform:scaleX(0.9192);transform-origin:0 0;">PI Graph 1</div>
<div class="t" style="left:599.67px;top:127px;transform:scaleX(0.9345);transform-origin:0 0;">PIF Graph 1</div>
<div class="t" style="left:696.90px;top:127px;transform:scaleX(0.9121);transform-origin:0 0;">Jitter 1</div>
<div class="t" style="left:568.79px;top:144px;transform:scaleX(1.0053);transform-origin:0 0;">Line</div>
<div class="t" style="left:659.04px;top:144px;transform:scaleX(0.9615);transform-origin:0 0;">Block</div>
<div class="t" style="left:511.61px;top:223px;transform:scaleX(0.9880);transform-origin:0 0;">Scan Drv2</div>
<div class="t" style="left:511.87px;top:246px;transform:scaleX(0.9250);transform-origin:0 0;">MID Code</div>
<div class="t" style="left:513.20px;top:266px;transform:scaleX(0.9558);transform-origin:0 0;">Type/Book</div>
<div class="t" style="left:586.04px;top:266px;transform:scaleX(0.9574);transform-origin:0 0;">DVD+RW</div>
<div class="t" style="left:676.53px;top:266px;transform:scaleX(0.9745);transform-origin:0 0;">DVD+RW</div>
<div class="t" style="left:516.88px;top:307px;transform:scaleX(0.9192);transform-origin:0 0;">PI Graph 2</div>
<div class="t" style="left:599.67px;top:307px;transform:scaleX(0.9345);transform-origin:0 0;">PIF Graph 2</div>
<div class="t" style="left:696.90px;top:307px;transform:scaleX(0.9121);transform-origin:0 0;">Jitter 2</div>
<div class="t" style="left:568.79px;top:324px;transform:scaleX(1.0053);transform-origin:0 0;">Line</div>
<div class="t" style="left:659.04px;top:324px;transform:scaleX(0.9615);transform-origin:0 0;">Block</div>
<div class="t" style="left:571.67px;top:42px;transform:scaleX(0.9267);transform-origin:0 0;">BENQ</div>
<div class="abs" style="left:569px;top:220px;width:169.0px;height:16px;overflow:hidden;"><div class="t" style="left:2.64px;top:2px;transform:scaleX(0.9553);transform-origin:0 0;">LITE-ON DVDRW SOHW-832S VSB1</div></div>
<div class="t" style="left:611.35px;top:42px;transform:scaleX(0.9521);transform-origin:0 0;">DVD DD DW1640 BSKB</div>
<div class="t" style="left:533.00px;top:173px;transform:scaleX(0.9545);transform-origin:0 0;">Jitter Inst</div>
<div class="t" style="left:537.77px;top:188px;transform:scaleX(1.0345);transform-origin:0 0;">11.5%</div>
<div class="t" style="left:598.00px;top:173px;transform:scaleX(0.9192);transform-origin:0 0;">Jitter Peak</div>
<div class="t" style="left:602.90px;top:188px;">12.0%</div>
<div class="t" style="left:663.00px;top:173px;transform:scaleX(1.0067);transform-origin:0 0;">Jitter Avg</div>
<div class="t" style="left:667.38px;top:188px;transform:scaleX(1.0200);transform-origin:0 0;">10.4%</div>
<div class="t" style="left:532.60px;top:353px;transform:scaleX(0.9780);transform-origin:0 0;">Jitter Inst2</div>
<div class="t" style="left:597.60px;top:353px;transform:scaleX(0.9448);transform-origin:0 0;">Jitter Peak2</div>
<div class="t" style="left:663.00px;top:353px;transform:scaleX(1.0067);transform-origin:0 0;">Jitter Avg</div>
<svg class="abs" style="left:18px;top:506px" width="42" height="42">
<defs><radialGradient id="cdg" cx="0.45" cy="0.4" r="0.65"><stop offset="0" stop-color="rgba(236,234,230,0.45)"/><stop offset="0.8" stop-color="rgba(215,213,210,0.40)"/><stop offset="1" stop-color="rgba(170,168,165,0.42)"/></radialGradient></defs>
<circle cx="20.6" cy="21" r="18" fill="url(#cdg)"/>
<circle cx="20.6" cy="21" r="17.6" fill="none" stroke="rgba(120,118,115,0.25)" stroke-width="1"/>
<circle cx="20.9" cy="21.2" r="7" fill="rgba(245,244,242,0.55)"/>
<circle cx="20.9" cy="21.3" r="3.4" fill="rgba(190,188,185,0.6)"/>
</svg><div class="abs" style="left:3px;top:544px;font-family:'Liberation Sans';font-weight:bold;font-size:21px;line-height:24px;color:#e3e0db;transform:scaleX(0.595);transform-origin:0 0;white-space:nowrap;letter-spacing:-0.5px;">CDRLabs.com</div>
</body></html>
